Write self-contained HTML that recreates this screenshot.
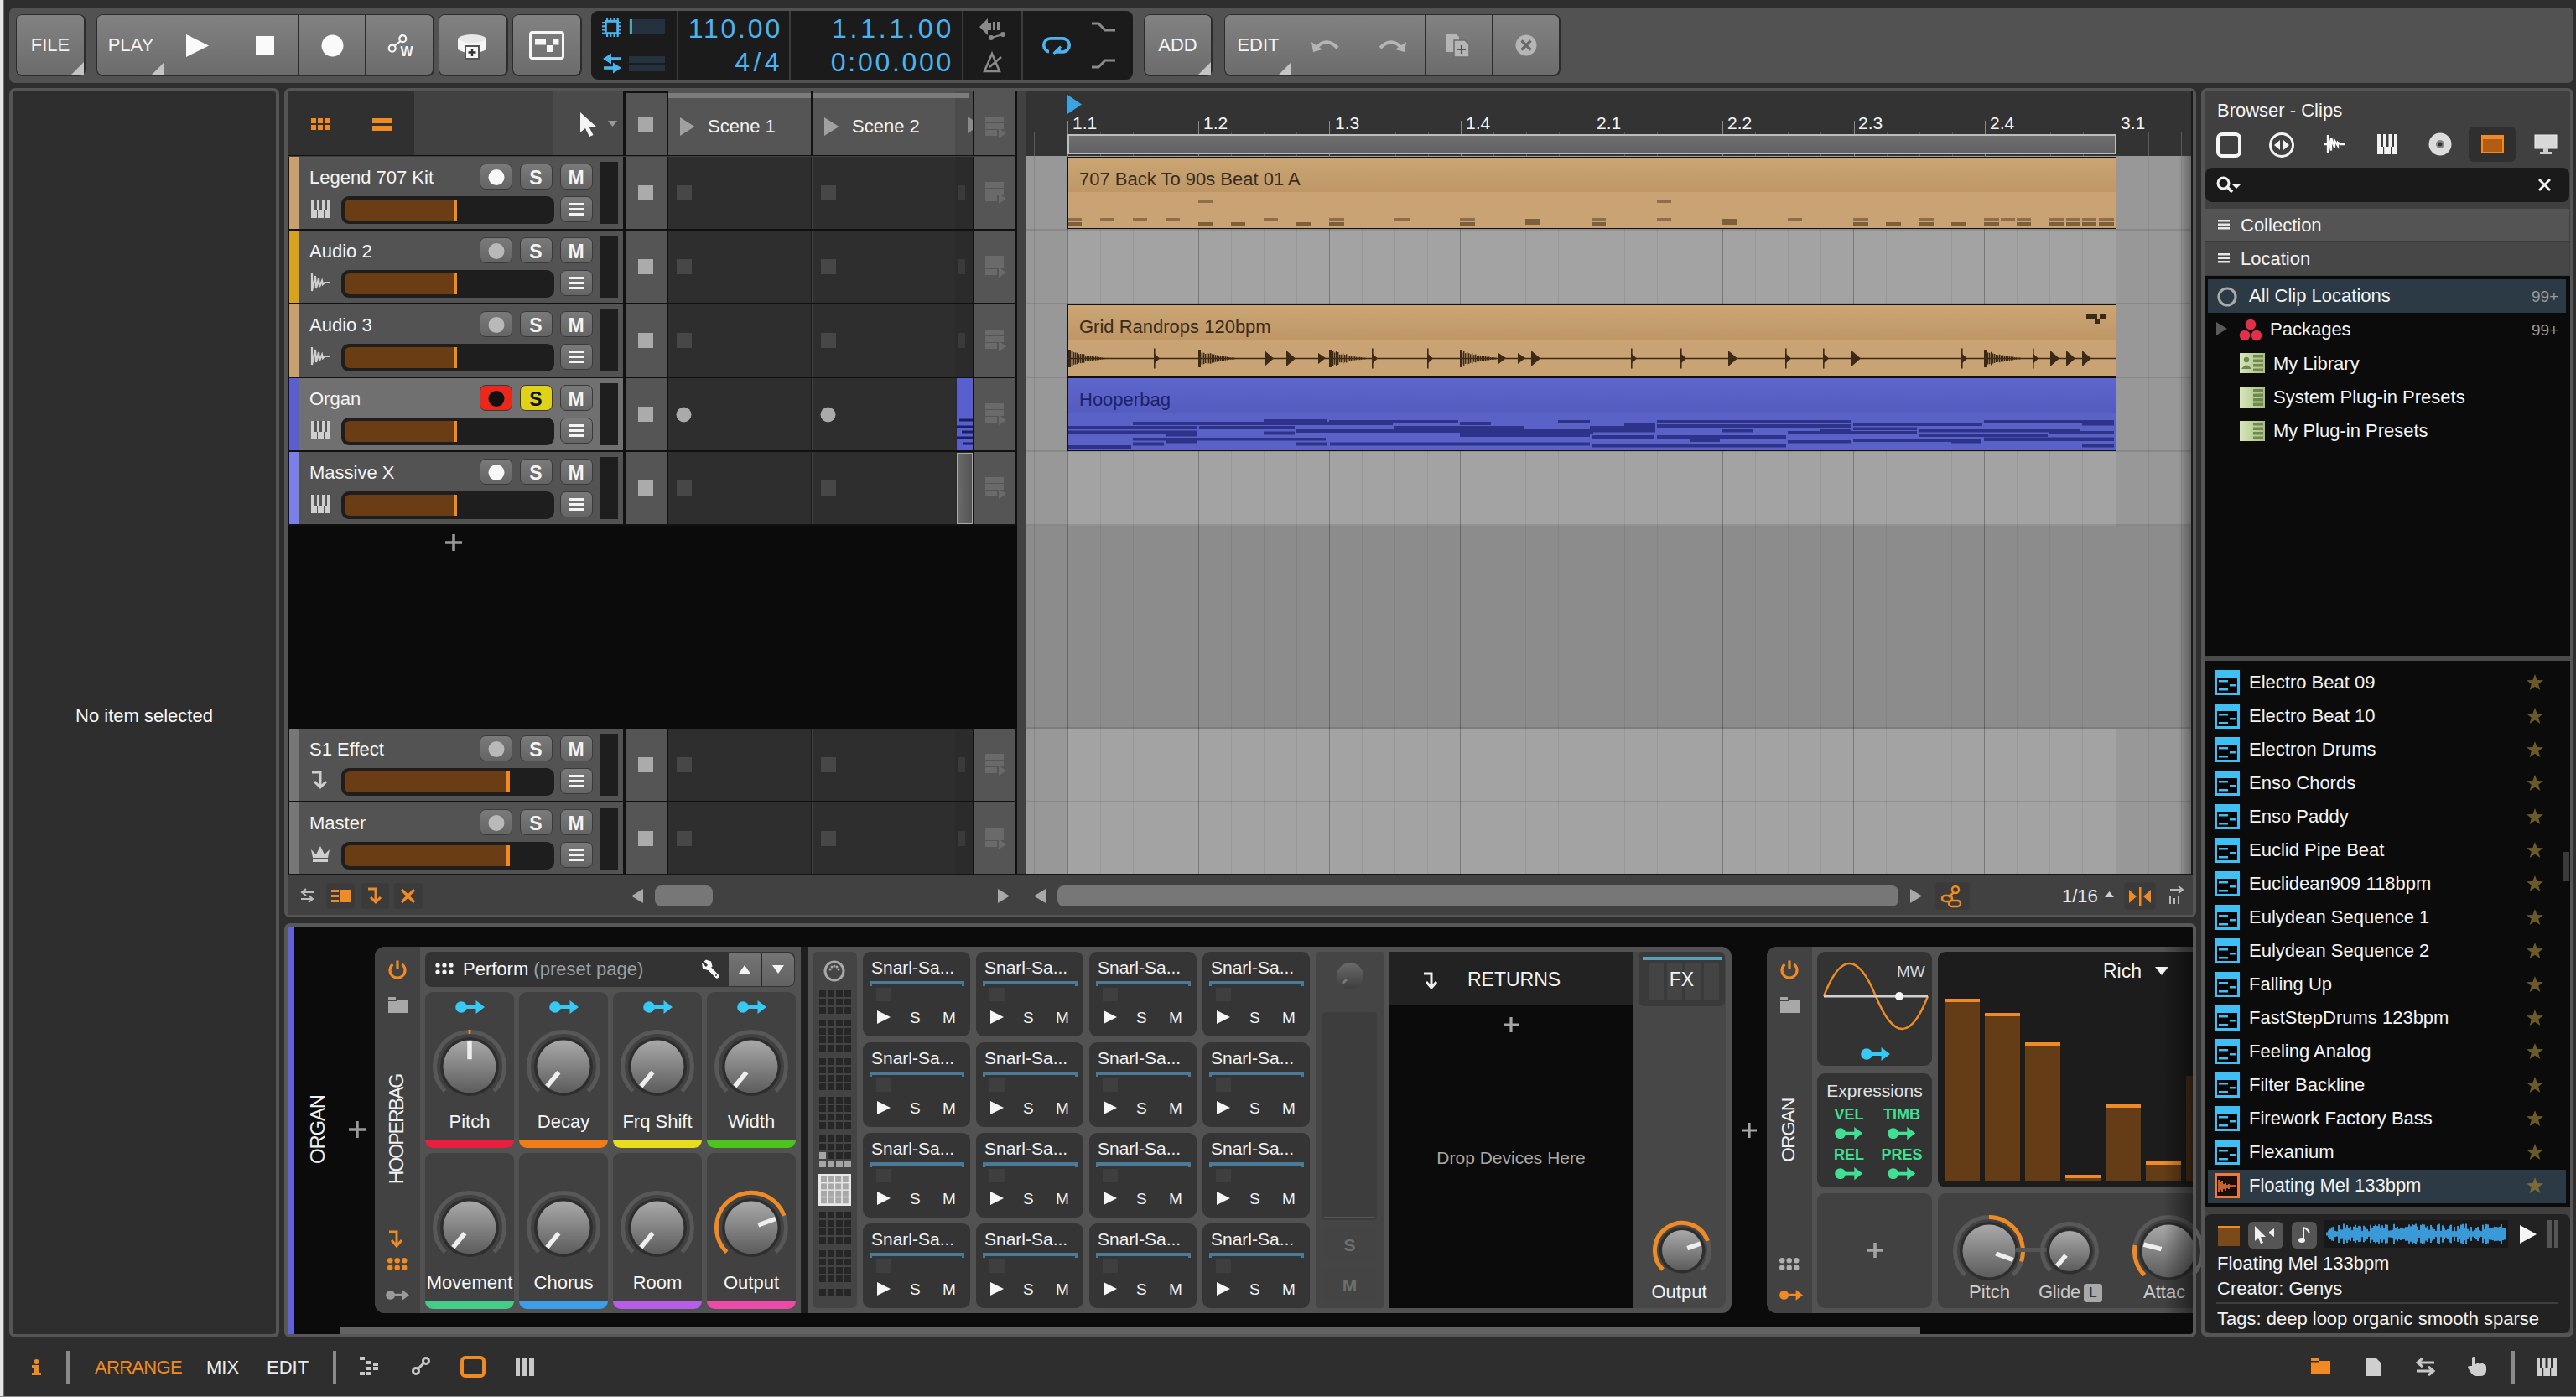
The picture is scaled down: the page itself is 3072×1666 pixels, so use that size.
<!DOCTYPE html><html><head><meta charset="utf-8"><title>Bitwig</title><style>
html,body{margin:0;padding:0;}
body{width:3072px;height:1666px;overflow:hidden;background:#2e2e2e;position:relative;font-family:"Liberation Sans",sans-serif;}
.a{position:absolute;box-sizing:border-box;}
.t{position:absolute;line-height:1;white-space:nowrap;}
svg.a{overflow:visible;}
</style></head><body>
<div class="a" style="left:0px;top:0px;width:3px;height:1666px;background:#e6e6e6;"></div>
<div class="a" style="left:3px;top:0px;width:1px;height:1666px;background:#1c1c1c;"></div>
<div class="a" style="left:4px;top:0px;width:1px;height:1666px;background:#6e6e6e;"></div>
<div class="a" style="left:11px;top:9px;width:3058px;height:90px;background:#525252;border-radius:7px;"></div>
<div class="a" style="left:18.5px;top:16.5px;width:83px;height:74px;background:#2c2c2c;border-radius:8px;"></div>
<div class="a" style="left:20px;top:18px;width:80px;height:71px;background:linear-gradient(#828282,#6c6c6c);border-top-left-radius:6px;border-bottom-left-radius:6px;border-top-right-radius:6px;border-bottom-right-radius:6px;"></div>
<div class="t" style="left:20px;top:43px;font-size:22px;color:#f4f4f4;text-align:center;width:80px;">FILE</div>
<svg class="a" style="left:85px;top:74px;" width="15" height="15" viewBox="0 0 15 15"><path d="M15 0 L15 15 L0 15 Z" fill="#c4c4c4"/></svg>
<div class="a" style="left:114.5px;top:16.5px;width:403px;height:74px;background:#2c2c2c;border-radius:8px;"></div>
<div class="a" style="left:116px;top:18px;width:79px;height:71px;background:linear-gradient(#828282,#6c6c6c);border-top-left-radius:6px;border-bottom-left-radius:6px;"></div>
<div class="a" style="left:196px;top:18px;width:79px;height:71px;background:linear-gradient(#828282,#6c6c6c);"></div>
<div class="a" style="left:276px;top:18px;width:79px;height:71px;background:linear-gradient(#828282,#6c6c6c);"></div>
<div class="a" style="left:356px;top:18px;width:79px;height:71px;background:linear-gradient(#828282,#6c6c6c);"></div>
<div class="a" style="left:436px;top:18px;width:80px;height:71px;background:linear-gradient(#828282,#6c6c6c);border-top-right-radius:6px;border-bottom-right-radius:6px;"></div>
<div class="t" style="left:116px;top:43px;font-size:22px;color:#f4f4f4;text-align:center;width:80px;">PLAY</div>
<svg class="a" style="left:181px;top:74px;" width="15" height="15" viewBox="0 0 15 15"><path d="M15 0 L15 15 L0 15 Z" fill="#c4c4c4"/></svg>
<svg class="a" style="left:222px;top:41px;" width="28" height="27" viewBox="0 0 28 27"><path d="M0 0 L27 13.5 L0 27 Z" fill="#fafafa"/></svg>
<div class="a" style="left:305px;top:43px;width:22px;height:22px;background:#fafafa;"></div>
<svg class="a" style="left:383px;top:41px;" width="27" height="27" viewBox="0 0 27 27"><circle cx="13.5" cy="13.5" r="13" fill="#fafafa"/></svg>
<svg class="a" style="left:460px;top:40px;" width="34" height="30" viewBox="0 0 34 30"><circle cx="7.7" cy="17.7" r="4" fill="none" stroke="#f6f6f6" stroke-width="2.2"/><circle cx="20.3" cy="6.2" r="4" fill="none" stroke="#f6f6f6" stroke-width="2.2"/><line x1="10.3" y1="14.8" x2="17.7" y2="9" stroke="#f6f6f6" stroke-width="2.2"/><text x="17.5" y="27" font-size="16" font-weight="bold" fill="#f6f6f6" font-family="Liberation Sans">W</text></svg>
<div class="a" style="left:522.5px;top:16.5px;width:83px;height:74px;background:#2c2c2c;border-radius:8px;"></div>
<div class="a" style="left:524px;top:18px;width:80px;height:71px;background:linear-gradient(#828282,#6c6c6c);border-top-left-radius:6px;border-bottom-left-radius:6px;border-top-right-radius:6px;border-bottom-right-radius:6px;"></div>
<svg class="a" style="left:546px;top:40px;" width="36" height="30" viewBox="0 0 36 30"><ellipse cx="17" cy="7" rx="17" ry="6" fill="#e8e8e8"/><path d="M0 7 L0 19 Q17 28 34 19 L34 7 Q17 16 0 7Z" fill="#f6f6f6"/><rect x="9" y="15" width="16" height="15" fill="#f6f6f6" stroke="#555" stroke-width="2"/><path d="M17 18 V27 M12.5 22.5 H21.5" stroke="#333" stroke-width="2.4"/></svg>
<div class="a" style="left:610.5px;top:16.5px;width:83px;height:74px;background:#2c2c2c;border-radius:8px;"></div>
<div class="a" style="left:612px;top:18px;width:80px;height:71px;background:linear-gradient(#828282,#6c6c6c);border-top-left-radius:6px;border-bottom-left-radius:6px;border-top-right-radius:6px;border-bottom-right-radius:6px;"></div>
<svg class="a" style="left:631px;top:37px;" width="42" height="34" viewBox="0 0 42 34"><rect x="1.5" y="1.5" width="39" height="31" rx="2.5" fill="none" stroke="#f6f6f6" stroke-width="3"/><rect x="7" y="9" width="13" height="7.5" fill="#f6f6f6"/><rect x="28" y="9" width="7.5" height="7.5" fill="#f6f6f6"/><rect x="21" y="17" width="7" height="8" fill="#f6f6f6"/></svg>
<div class="a" style="left:705px;top:13px;width:646px;height:82px;background:#1b1b1b;border-radius:8px;"></div>
<div class="a" style="left:807px;top:13px;width:2px;height:82px;background:#3c3c3c;"></div>
<div class="a" style="left:941px;top:13px;width:2px;height:82px;background:#3c3c3c;"></div>
<div class="a" style="left:1147px;top:13px;width:2px;height:82px;background:#3c3c3c;"></div>
<div class="a" style="left:1218px;top:13px;width:2px;height:82px;background:#3c3c3c;"></div>
<svg class="a" style="left:718px;top:21px;" width="24" height="24" viewBox="0 0 24 24"><rect x="4.4" y="4.4" width="14.2" height="14.2" fill="none" stroke="#4ab4ee" stroke-width="2.8"/><rect x="5.0" y="0" width="2.2" height="3" fill="#4ab4ee"/><rect x="5.0" y="20" width="2.2" height="3" fill="#4ab4ee"/><rect x="0" y="5.0" width="3" height="2.2" fill="#4ab4ee"/><rect x="20" y="5.0" width="3" height="2.2" fill="#4ab4ee"/><rect x="9.2" y="0" width="2.2" height="3" fill="#4ab4ee"/><rect x="9.2" y="20" width="2.2" height="3" fill="#4ab4ee"/><rect x="0" y="9.2" width="3" height="2.2" fill="#4ab4ee"/><rect x="20" y="9.2" width="3" height="2.2" fill="#4ab4ee"/><rect x="13.4" y="0" width="2.2" height="3" fill="#4ab4ee"/><rect x="13.4" y="20" width="2.2" height="3" fill="#4ab4ee"/><rect x="0" y="13.4" width="3" height="2.2" fill="#4ab4ee"/><rect x="20" y="13.4" width="3" height="2.2" fill="#4ab4ee"/><rect x="17.6" y="0" width="2.2" height="3" fill="#4ab4ee"/><rect x="17.6" y="20" width="2.2" height="3" fill="#4ab4ee"/><rect x="0" y="17.6" width="3" height="2.2" fill="#4ab4ee"/><rect x="20" y="17.6" width="3" height="2.2" fill="#4ab4ee"/></svg>
<div class="a" style="left:750px;top:23px;width:43px;height:18px;background:#23323e;"></div>
<div class="a" style="left:751px;top:23px;width:3px;height:18px;background:#4aa8a8;"></div>
<svg class="a" style="left:718px;top:63px;" width="26" height="26" viewBox="0 0 26 26"><path d="M1 7 L11 0.5 L11 13.5 Z" fill="#4ab4ee"/><rect x="10" y="5.2" width="12" height="3.6" fill="#4ab4ee"/><path d="M23 18 L13 11.5 L13 24.5 Z" fill="#4ab4ee"/><rect x="2" y="16.2" width="12" height="3.6" fill="#4ab4ee"/></svg>
<div class="a" style="left:750px;top:67px;width:43px;height:8px;background:#23323e;"></div>
<div class="a" style="left:750px;top:77px;width:43px;height:8px;background:#23323e;"></div>
<div class="t" style="left:700px;top:18px;font-size:32px;color:#4cb3ee;text-align:right;width:233px;letter-spacing:2.8px;">110.00</div>
<div class="t" style="left:700px;top:58px;font-size:32px;color:#4cb3ee;text-align:right;width:234px;letter-spacing:4.4px;">4/4</div>
<div class="t" style="left:900px;top:18px;font-size:32px;color:#4cb3ee;text-align:right;width:238px;letter-spacing:3.8px;">1.1.1.00</div>
<div class="t" style="left:900px;top:58px;font-size:32px;color:#4cb3ee;text-align:right;width:237px;letter-spacing:2.7px;">0:00.000</div>
<svg class="a" style="left:1168px;top:22px;" width="32" height="30" viewBox="0 0 32 30"><path d="M0 10 L10 0 V6 H14 V14 H10 V20 Z" fill="#8a8a8a"/><rect x="16" y="4" width="3" height="10" fill="#8a8a8a"/><rect x="21" y="4" width="3" height="10" fill="#8a8a8a"/><circle cx="14" cy="23" r="3" fill="#8a8a8a"/><circle cx="28" cy="19" r="3" fill="#8a8a8a"/><line x1="14" y1="23" x2="28" y2="19" stroke="#8a8a8a" stroke-width="2"/></svg>
<svg class="a" style="left:1172px;top:62px;" width="26" height="24" viewBox="0 0 26 24"><path d="M2 23 L11 2 L20 23 Z" fill="none" stroke="#8a8a8a" stroke-width="2.5"/><line x1="8" y1="18" x2="22" y2="6" stroke="#8a8a8a" stroke-width="2.5"/></svg>
<svg class="a" style="left:1241px;top:42px;" width="40" height="26" viewBox="0 0 40 26"><rect x="3.75" y="3.85" width="30.5" height="16.1" rx="8" fill="none" stroke="#4cb3ee" stroke-width="3.6"/><rect x="10" y="17" width="7" height="6" fill="#1b1b1b"/><path d="M15.5 22 L24 13.5 L24 20 Z" fill="#4cb3ee"/><line x1="15.5" y1="22" x2="24" y2="13.5" stroke="#4cb3ee" stroke-width="3"/></svg>
<svg class="a" style="left:1301px;top:26px;" width="30" height="12" viewBox="0 0 30 12"><path d="M1 2 H9 L17 10 H29" fill="none" stroke="#8a8a8a" stroke-width="3"/></svg>
<svg class="a" style="left:1301px;top:70px;" width="30" height="12" viewBox="0 0 30 12"><path d="M1 10 H9 L17 2 H29" fill="none" stroke="#8a8a8a" stroke-width="3"/></svg>
<div class="a" style="left:1363.5px;top:16.5px;width:82px;height:74px;background:#2c2c2c;border-radius:8px;"></div>
<div class="a" style="left:1365px;top:18px;width:79px;height:71px;background:linear-gradient(#828282,#6c6c6c);border-top-left-radius:6px;border-bottom-left-radius:6px;border-top-right-radius:6px;border-bottom-right-radius:6px;"></div>
<div class="t" style="left:1365px;top:43px;font-size:22px;color:#f4f4f4;text-align:center;width:79px;">ADD</div>
<svg class="a" style="left:1429px;top:74px;" width="15" height="15" viewBox="0 0 15 15"><path d="M15 0 L15 15 L0 15 Z" fill="#c4c4c4"/></svg>
<div class="a" style="left:1459.5px;top:16.5px;width:401px;height:74px;background:#2c2c2c;border-radius:8px;"></div>
<div class="a" style="left:1461px;top:18px;width:78px;height:71px;background:linear-gradient(#828282,#6c6c6c);border-top-left-radius:6px;border-bottom-left-radius:6px;"></div>
<div class="a" style="left:1540px;top:18px;width:79px;height:71px;background:linear-gradient(#828282,#6c6c6c);"></div>
<div class="a" style="left:1620px;top:18px;width:79px;height:71px;background:linear-gradient(#828282,#6c6c6c);"></div>
<div class="a" style="left:1700px;top:18px;width:79px;height:71px;background:linear-gradient(#828282,#6c6c6c);"></div>
<div class="a" style="left:1780px;top:18px;width:79px;height:71px;background:linear-gradient(#828282,#6c6c6c);border-top-right-radius:6px;border-bottom-right-radius:6px;"></div>
<div class="t" style="left:1461px;top:43px;font-size:22px;color:#f4f4f4;text-align:center;width:79px;">EDIT</div>
<svg class="a" style="left:1525px;top:74px;" width="15" height="15" viewBox="0 0 15 15"><path d="M15 0 L15 15 L0 15 Z" fill="#c4c4c4"/></svg>
<svg class="a" style="left:1563px;top:42px;" width="36" height="22" viewBox="0 0 36 22"><path d="M6 16 Q18 1 32 15" fill="none" stroke="#b5b5b5" stroke-width="4"/><path d="M1 8 L3 20 L14 17 Z" fill="#b5b5b5"/></svg>
<svg class="a" style="left:1642px;top:42px;" width="36" height="22" viewBox="0 0 36 22"><path d="M4 15 Q18 1 30 16" fill="none" stroke="#b5b5b5" stroke-width="4"/><path d="M35 8 L33 20 L22 17 Z" fill="#b5b5b5"/></svg>
<svg class="a" style="left:1724px;top:40px;" width="32" height="28" viewBox="0 0 32 28"><path d="M0 0 H12 L16 4 V22 H0 Z" fill="#b5b5b5"/><path d="M10 8 H23 L28 13 V28 H10 Z" fill="#b5b5b5" stroke="#6e6e6e" stroke-width="1.5"/><path d="M19 14 V24 M14 19 H24" stroke="#555" stroke-width="2.2"/></svg>
<svg class="a" style="left:1807px;top:41px;" width="26" height="26" viewBox="0 0 26 26"><circle cx="13" cy="13" r="12.5" fill="#b5b5b5"/><path d="M7.5 7.5 L18.5 18.5 M18.5 7.5 L7.5 18.5" stroke="#686868" stroke-width="3.2"/></svg>
<div class="a" style="left:11px;top:105px;width:322px;height:1490px;background:#2e2e2e;border:4px solid #555;border-radius:7px;"></div>
<div class="t" style="left:11px;top:843px;font-size:22px;color:#f6f6f6;text-align:center;width:322px;">No item selected</div>
<div class="a" style="left:339px;top:105px;width:2280px;height:989px;background:#414141;border:4px solid #555;border-radius:7px;"></div>
<div class="a" style="left:343px;top:109px;width:870px;height:77px;background:#111;"></div>
<div class="a" style="left:343px;top:109px;width:151px;height:76px;background:#303030;"></div>
<div class="a" style="left:494px;top:109px;width:166px;height:76px;background:#414141;"></div>
<div class="a" style="left:660px;top:109px;width:83px;height:76px;background:#4a4a4a;"></div>
<svg class="a" style="left:371px;top:141px;" width="24" height="16" viewBox="0 0 24 16"><rect x="0" y="0" width="6" height="6" fill="#f08a24"/><rect x="8" y="0" width="6" height="6" fill="#f08a24"/><rect x="16" y="0" width="6" height="6" fill="#f08a24"/><rect x="0" y="8" width="6" height="6" fill="#f08a24"/><rect x="8" y="8" width="6" height="6" fill="#f08a24"/><rect x="16" y="8" width="6" height="6" fill="#f08a24"/></svg>
<svg class="a" style="left:444px;top:140px;" width="24" height="18" viewBox="0 0 24 18"><rect x="0" y="1" width="23" height="6" fill="#f08a24"/><rect x="0" y="10" width="23" height="6" fill="#f08a24"/></svg>
<svg class="a" style="left:691px;top:133px;" width="46" height="32" viewBox="0 0 46 32"><path d="M1 1 L1 25 L7 20 L12 30 L16.5 28 L11.5 18.5 L20 18 Z" fill="#f4f4f4"/><path d="M34 11 L45 11 L39.5 18 Z" fill="#9a9a9a"/></svg>
<div class="a" style="left:746px;top:109px;width:50px;height:76px;background:#555;"></div>
<div class="a" style="left:761px;top:139px;width:18px;height:18px;background:#a8a8a8;"></div>
<div class="a" style="left:743px;top:109px;width:470px;height:2px;background:#111;"></div>
<div class="a" style="left:797px;top:109px;width:170px;height:76px;background:#555;"></div>
<div class="a" style="left:797px;top:111px;width:170px;height:6px;background:#7c7c7c;"></div>
<svg class="a" style="left:811px;top:140px;" width="18" height="22" viewBox="0 0 18 22"><path d="M0 0 L17.5 11 L0 22 Z" fill="#a0a0a0"/></svg>
<div class="t" style="left:844px;top:140px;font-size:22px;color:#f2f2f2;text-align:left;white-space:nowrap;">Scene 1</div>
<div class="a" style="left:969px;top:109px;width:170px;height:76px;background:#555;"></div>
<div class="a" style="left:969px;top:111px;width:170px;height:6px;background:#7c7c7c;"></div>
<svg class="a" style="left:983px;top:140px;" width="18" height="22" viewBox="0 0 18 22"><path d="M0 0 L17.5 11 L0 22 Z" fill="#a0a0a0"/></svg>
<div class="t" style="left:1016px;top:140px;font-size:22px;color:#f2f2f2;text-align:left;white-space:nowrap;">Scene 2</div>
<div class="a" style="left:1139px;top:109px;width:21px;height:76px;background:#4c4c4c;"></div>
<div class="a" style="left:1139px;top:111px;width:16px;height:6px;background:#7c7c7c;"></div>
<svg class="a" style="left:1154px;top:139px;" width="6" height="20" viewBox="0 0 6 20"><path d="M0 0 L6 4 L6 16 L0 20 Z" fill="#8a8a8a"/></svg>
<div class="a" style="left:1162px;top:109px;width:49px;height:76px;background:#555;"></div>
<div class="a" style="left:1211px;top:109px;width:2px;height:934px;background:#111;"></div>
<svg class="a" style="left:1175px;top:139px;" width="26" height="26" viewBox="0 0 26 26"><rect x="0" y="0" width="22" height="7" fill="#6a6a6a"/><rect x="0" y="8" width="22" height="7" fill="#6a6a6a"/><rect x="0" y="16" width="14" height="7" fill="#6a6a6a"/><path d="M16 14 L25 20 L16 26 Z" fill="#6a6a6a"/></svg>
<div class="a" style="left:343px;top:187px;width:400px;height:86px;background:#535353;"></div>
<div class="a" style="left:343px;top:187px;width:2px;height:86px;background:#111;"></div>
<div class="a" style="left:345px;top:187px;width:12px;height:86px;background:#c9a070;"></div>
<div class="t" style="left:369px;top:201px;font-size:22px;color:#f4f4f4;text-align:left;white-space:nowrap;">Legend 707 Kit</div>
<div class="a" style="left:572px;top:195px;width:39px;height:31px;background:linear-gradient(#7a7a7a,#656565);border:1.5px solid #3a3a3a;border-radius:7px;"><svg class="a" style="left:8px;top:5px;" width="22" height="22" viewBox="0 0 22 22"><circle cx="11" cy="10.5" r="9.5" fill="#f8f8f8"/></svg></div>
<div class="a" style="left:620px;top:195px;width:39px;height:31px;background:linear-gradient(#7a7a7a,#656565);border:1.5px solid #3a3a3a;border-radius:7px;"><div class="t" style="left:0px;top:5px;font-size:23px;color:#f4f4f4;text-align:center;width:36px;font-weight:bold;">S</div></div>
<div class="a" style="left:668px;top:195px;width:39px;height:31px;background:linear-gradient(#7a7a7a,#656565);border:1.5px solid #3a3a3a;border-radius:7px;"><div class="t" style="left:0px;top:5px;font-size:23px;color:#f4f4f4;text-align:center;width:36px;font-weight:bold;">M</div></div>
<div class="a" style="left:668px;top:234px;width:39px;height:31px;background:linear-gradient(#7a7a7a,#656565);border:1.5px solid #3a3a3a;border-radius:7px;"><svg class="a" style="left:9px;top:7px;" width="20" height="16" viewBox="0 0 20 16"><rect x="0" y="0" width="19" height="3" fill="#f4f4f4"/><rect x="0" y="6" width="19" height="3" fill="#f4f4f4"/><rect x="0" y="12" width="19" height="3" fill="#f4f4f4"/></svg></div>
<svg class="a" style="left:371px;top:238px;" width="23" height="22" viewBox="0 0 23 22"><rect x="0" y="0" width="23" height="22" fill="#cfcfcf"/><rect x="4" y="0" width="3" height="13" fill="#555"/><rect x="10" y="0" width="3" height="13" fill="#555"/><rect x="16" y="0" width="3" height="13" fill="#555"/><rect x="7" y="13" width="1" height="9" fill="#555"/><rect x="15" y="13" width="1" height="9" fill="#555"/></svg>
<div class="a" style="left:407px;top:234px;width:254px;height:33px;background:#1e1e1e;border-radius:9px;"></div>
<div class="a" style="left:411px;top:238px;width:134px;height:25px;background:#6b3d14;border-radius:6px 0 0 6px;"></div>
<div class="a" style="left:541px;top:238px;width:4px;height:25px;background:#f18a1f;"></div>
<div class="a" style="left:715px;top:193px;width:22px;height:74px;background:#1e1e1e;"></div>
<div class="a" style="left:743px;top:187px;width:3px;height:86px;background:#111;"></div>
<div class="a" style="left:746px;top:187px;width:50px;height:86px;background:#555;"></div>
<div class="a" style="left:761px;top:221px;width:18px;height:18px;background:#ababab;"></div>
<div class="a" style="left:796px;top:187px;width:1px;height:86px;background:#111;"></div>
<div class="a" style="left:797px;top:187px;width:171px;height:86px;background:#2e2e2e;"></div>
<div class="a" style="left:967px;top:187px;width:1px;height:86px;background:#1c1c1c;"></div>
<div class="a" style="left:807px;top:221px;width:18px;height:18px;background:#474747;"></div>
<div class="a" style="left:969px;top:187px;width:171px;height:86px;background:#2e2e2e;"></div>
<div class="a" style="left:1139px;top:187px;width:1px;height:86px;background:#1c1c1c;"></div>
<div class="a" style="left:979px;top:221px;width:18px;height:18px;background:#474747;"></div>
<div class="a" style="left:1139px;top:187px;width:21px;height:86px;background:#2b2b2b;"></div>
<div class="a" style="left:1143px;top:221px;width:8px;height:18px;background:#3a3a3a;"></div>
<div class="a" style="left:1160px;top:187px;width:2px;height:86px;background:#111;"></div>
<div class="a" style="left:1162px;top:187px;width:49px;height:86px;background:#555;"></div>
<svg class="a" style="left:1175px;top:217px;" width="26" height="26" viewBox="0 0 26 26"><rect x="0" y="0" width="22" height="7" fill="#6a6a6a"/><rect x="0" y="8" width="22" height="7" fill="#6a6a6a"/><rect x="0" y="16" width="14" height="7" fill="#6a6a6a"/><path d="M16 14 L25 20 L16 26 Z" fill="#6a6a6a"/></svg>
<div class="a" style="left:343px;top:273px;width:870px;height:2px;background:#111;"></div>
<div class="a" style="left:343px;top:275px;width:400px;height:86px;background:#535353;"></div>
<div class="a" style="left:343px;top:275px;width:2px;height:86px;background:#111;"></div>
<div class="a" style="left:345px;top:275px;width:12px;height:86px;background:#d9a21b;"></div>
<div class="t" style="left:369px;top:289px;font-size:22px;color:#f4f4f4;text-align:left;white-space:nowrap;">Audio 2</div>
<div class="a" style="left:572px;top:283px;width:39px;height:31px;background:linear-gradient(#7a7a7a,#656565);border:1.5px solid #3a3a3a;border-radius:7px;"><svg class="a" style="left:8px;top:5px;" width="22" height="22" viewBox="0 0 22 22"><circle cx="11" cy="10.5" r="9.5" fill="#b9b9b9"/></svg></div>
<div class="a" style="left:620px;top:283px;width:39px;height:31px;background:linear-gradient(#7a7a7a,#656565);border:1.5px solid #3a3a3a;border-radius:7px;"><div class="t" style="left:0px;top:5px;font-size:23px;color:#f4f4f4;text-align:center;width:36px;font-weight:bold;">S</div></div>
<div class="a" style="left:668px;top:283px;width:39px;height:31px;background:linear-gradient(#7a7a7a,#656565);border:1.5px solid #3a3a3a;border-radius:7px;"><div class="t" style="left:0px;top:5px;font-size:23px;color:#f4f4f4;text-align:center;width:36px;font-weight:bold;">M</div></div>
<div class="a" style="left:668px;top:322px;width:39px;height:31px;background:linear-gradient(#7a7a7a,#656565);border:1.5px solid #3a3a3a;border-radius:7px;"><svg class="a" style="left:9px;top:7px;" width="20" height="16" viewBox="0 0 20 16"><rect x="0" y="0" width="19" height="3" fill="#f4f4f4"/><rect x="0" y="6" width="19" height="3" fill="#f4f4f4"/><rect x="0" y="12" width="19" height="3" fill="#f4f4f4"/></svg></div>
<svg class="a" style="left:370px;top:325px;" width="26" height="26" viewBox="0 0 26 26"><polyline points="2,1 2,22 6,4 7,19 10,7 11,17 14,10 15,14 17,12 23,12" stroke="#cfcfcf" stroke-width="2.2" fill="none" stroke-linejoin="miter"/></svg>
<div class="a" style="left:407px;top:322px;width:254px;height:33px;background:#1e1e1e;border-radius:9px;"></div>
<div class="a" style="left:411px;top:326px;width:134px;height:25px;background:#6b3d14;border-radius:6px 0 0 6px;"></div>
<div class="a" style="left:541px;top:326px;width:4px;height:25px;background:#f18a1f;"></div>
<div class="a" style="left:715px;top:281px;width:22px;height:74px;background:#1e1e1e;"></div>
<div class="a" style="left:743px;top:275px;width:3px;height:86px;background:#111;"></div>
<div class="a" style="left:746px;top:275px;width:50px;height:86px;background:#555;"></div>
<div class="a" style="left:761px;top:309px;width:18px;height:18px;background:#ababab;"></div>
<div class="a" style="left:796px;top:275px;width:1px;height:86px;background:#111;"></div>
<div class="a" style="left:797px;top:275px;width:171px;height:86px;background:#2e2e2e;"></div>
<div class="a" style="left:967px;top:275px;width:1px;height:86px;background:#1c1c1c;"></div>
<div class="a" style="left:807px;top:309px;width:18px;height:18px;background:#474747;"></div>
<div class="a" style="left:969px;top:275px;width:171px;height:86px;background:#2e2e2e;"></div>
<div class="a" style="left:1139px;top:275px;width:1px;height:86px;background:#1c1c1c;"></div>
<div class="a" style="left:979px;top:309px;width:18px;height:18px;background:#474747;"></div>
<div class="a" style="left:1139px;top:275px;width:21px;height:86px;background:#2b2b2b;"></div>
<div class="a" style="left:1143px;top:309px;width:8px;height:18px;background:#3a3a3a;"></div>
<div class="a" style="left:1160px;top:275px;width:2px;height:86px;background:#111;"></div>
<div class="a" style="left:1162px;top:275px;width:49px;height:86px;background:#555;"></div>
<svg class="a" style="left:1175px;top:305px;" width="26" height="26" viewBox="0 0 26 26"><rect x="0" y="0" width="22" height="7" fill="#6a6a6a"/><rect x="0" y="8" width="22" height="7" fill="#6a6a6a"/><rect x="0" y="16" width="14" height="7" fill="#6a6a6a"/><path d="M16 14 L25 20 L16 26 Z" fill="#6a6a6a"/></svg>
<div class="a" style="left:343px;top:361px;width:870px;height:2px;background:#111;"></div>
<div class="a" style="left:343px;top:363px;width:400px;height:86px;background:#535353;"></div>
<div class="a" style="left:343px;top:363px;width:2px;height:86px;background:#111;"></div>
<div class="a" style="left:345px;top:363px;width:12px;height:86px;background:#c9a070;"></div>
<div class="t" style="left:369px;top:377px;font-size:22px;color:#f4f4f4;text-align:left;white-space:nowrap;">Audio 3</div>
<div class="a" style="left:572px;top:371px;width:39px;height:31px;background:linear-gradient(#7a7a7a,#656565);border:1.5px solid #3a3a3a;border-radius:7px;"><svg class="a" style="left:8px;top:5px;" width="22" height="22" viewBox="0 0 22 22"><circle cx="11" cy="10.5" r="9.5" fill="#b9b9b9"/></svg></div>
<div class="a" style="left:620px;top:371px;width:39px;height:31px;background:linear-gradient(#7a7a7a,#656565);border:1.5px solid #3a3a3a;border-radius:7px;"><div class="t" style="left:0px;top:5px;font-size:23px;color:#f4f4f4;text-align:center;width:36px;font-weight:bold;">S</div></div>
<div class="a" style="left:668px;top:371px;width:39px;height:31px;background:linear-gradient(#7a7a7a,#656565);border:1.5px solid #3a3a3a;border-radius:7px;"><div class="t" style="left:0px;top:5px;font-size:23px;color:#f4f4f4;text-align:center;width:36px;font-weight:bold;">M</div></div>
<div class="a" style="left:668px;top:410px;width:39px;height:31px;background:linear-gradient(#7a7a7a,#656565);border:1.5px solid #3a3a3a;border-radius:7px;"><svg class="a" style="left:9px;top:7px;" width="20" height="16" viewBox="0 0 20 16"><rect x="0" y="0" width="19" height="3" fill="#f4f4f4"/><rect x="0" y="6" width="19" height="3" fill="#f4f4f4"/><rect x="0" y="12" width="19" height="3" fill="#f4f4f4"/></svg></div>
<svg class="a" style="left:370px;top:413px;" width="26" height="26" viewBox="0 0 26 26"><polyline points="2,1 2,22 6,4 7,19 10,7 11,17 14,10 15,14 17,12 23,12" stroke="#cfcfcf" stroke-width="2.2" fill="none" stroke-linejoin="miter"/></svg>
<div class="a" style="left:407px;top:410px;width:254px;height:33px;background:#1e1e1e;border-radius:9px;"></div>
<div class="a" style="left:411px;top:414px;width:134px;height:25px;background:#6b3d14;border-radius:6px 0 0 6px;"></div>
<div class="a" style="left:541px;top:414px;width:4px;height:25px;background:#f18a1f;"></div>
<div class="a" style="left:715px;top:369px;width:22px;height:74px;background:#1e1e1e;"></div>
<div class="a" style="left:743px;top:363px;width:3px;height:86px;background:#111;"></div>
<div class="a" style="left:746px;top:363px;width:50px;height:86px;background:#555;"></div>
<div class="a" style="left:761px;top:397px;width:18px;height:18px;background:#ababab;"></div>
<div class="a" style="left:796px;top:363px;width:1px;height:86px;background:#111;"></div>
<div class="a" style="left:797px;top:363px;width:171px;height:86px;background:#2e2e2e;"></div>
<div class="a" style="left:967px;top:363px;width:1px;height:86px;background:#1c1c1c;"></div>
<div class="a" style="left:807px;top:397px;width:18px;height:18px;background:#474747;"></div>
<div class="a" style="left:969px;top:363px;width:171px;height:86px;background:#2e2e2e;"></div>
<div class="a" style="left:1139px;top:363px;width:1px;height:86px;background:#1c1c1c;"></div>
<div class="a" style="left:979px;top:397px;width:18px;height:18px;background:#474747;"></div>
<div class="a" style="left:1139px;top:363px;width:21px;height:86px;background:#2b2b2b;"></div>
<div class="a" style="left:1143px;top:397px;width:8px;height:18px;background:#3a3a3a;"></div>
<div class="a" style="left:1160px;top:363px;width:2px;height:86px;background:#111;"></div>
<div class="a" style="left:1162px;top:363px;width:49px;height:86px;background:#555;"></div>
<svg class="a" style="left:1175px;top:393px;" width="26" height="26" viewBox="0 0 26 26"><rect x="0" y="0" width="22" height="7" fill="#6a6a6a"/><rect x="0" y="8" width="22" height="7" fill="#6a6a6a"/><rect x="0" y="16" width="14" height="7" fill="#6a6a6a"/><path d="M16 14 L25 20 L16 26 Z" fill="#6a6a6a"/></svg>
<div class="a" style="left:343px;top:449px;width:870px;height:2px;background:#111;"></div>
<div class="a" style="left:343px;top:451px;width:400px;height:86px;background:#707070;"></div>
<div class="a" style="left:343px;top:451px;width:2px;height:86px;background:#111;"></div>
<div class="a" style="left:345px;top:451px;width:12px;height:86px;background:#5a5fd0;"></div>
<div class="t" style="left:369px;top:465px;font-size:22px;color:#f4f4f4;text-align:left;white-space:nowrap;">Organ</div>
<div class="a" style="left:572px;top:459px;width:39px;height:31px;background:#e8291c;border:1.5px solid #3a3a3a;border-radius:7px;"><svg class="a" style="left:8px;top:5px;" width="22" height="22" viewBox="0 0 22 22"><circle cx="11" cy="10.5" r="9.5" fill="#111"/></svg></div>
<div class="a" style="left:620px;top:459px;width:39px;height:31px;background:#dfd21a;border:1.5px solid #3a3a3a;border-radius:7px;"><div class="t" style="left:0px;top:5px;font-size:23px;color:#111;text-align:center;width:36px;font-weight:bold;">S</div></div>
<div class="a" style="left:668px;top:459px;width:39px;height:31px;background:linear-gradient(#7a7a7a,#656565);border:1.5px solid #3a3a3a;border-radius:7px;"><div class="t" style="left:0px;top:5px;font-size:23px;color:#f4f4f4;text-align:center;width:36px;font-weight:bold;">M</div></div>
<div class="a" style="left:668px;top:498px;width:39px;height:31px;background:linear-gradient(#7a7a7a,#656565);border:1.5px solid #3a3a3a;border-radius:7px;"><svg class="a" style="left:9px;top:7px;" width="20" height="16" viewBox="0 0 20 16"><rect x="0" y="0" width="19" height="3" fill="#f4f4f4"/><rect x="0" y="6" width="19" height="3" fill="#f4f4f4"/><rect x="0" y="12" width="19" height="3" fill="#f4f4f4"/></svg></div>
<svg class="a" style="left:371px;top:502px;" width="23" height="22" viewBox="0 0 23 22"><rect x="0" y="0" width="23" height="22" fill="#cfcfcf"/><rect x="4" y="0" width="3" height="13" fill="#555"/><rect x="10" y="0" width="3" height="13" fill="#555"/><rect x="16" y="0" width="3" height="13" fill="#555"/><rect x="7" y="13" width="1" height="9" fill="#555"/><rect x="15" y="13" width="1" height="9" fill="#555"/></svg>
<div class="a" style="left:407px;top:498px;width:254px;height:33px;background:#1e1e1e;border-radius:9px;"></div>
<div class="a" style="left:411px;top:502px;width:134px;height:25px;background:#6b3d14;border-radius:6px 0 0 6px;"></div>
<div class="a" style="left:541px;top:502px;width:4px;height:25px;background:#f18a1f;"></div>
<div class="a" style="left:715px;top:457px;width:22px;height:74px;background:#1e1e1e;"></div>
<div class="a" style="left:743px;top:451px;width:3px;height:86px;background:#111;"></div>
<div class="a" style="left:746px;top:451px;width:50px;height:86px;background:#555;"></div>
<div class="a" style="left:761px;top:485px;width:18px;height:18px;background:#ababab;"></div>
<div class="a" style="left:796px;top:451px;width:1px;height:86px;background:#111;"></div>
<div class="a" style="left:797px;top:451px;width:171px;height:86px;background:#2e2e2e;"></div>
<div class="a" style="left:967px;top:451px;width:1px;height:86px;background:#1c1c1c;"></div>
<svg class="a" style="left:806px;top:485px;" width="19" height="19" viewBox="0 0 19 19"><circle cx="9.5" cy="9.5" r="9" fill="#aaa"/></svg>
<div class="a" style="left:969px;top:451px;width:171px;height:86px;background:#2e2e2e;"></div>
<div class="a" style="left:1139px;top:451px;width:1px;height:86px;background:#1c1c1c;"></div>
<svg class="a" style="left:978px;top:485px;" width="19" height="19" viewBox="0 0 19 19"><circle cx="9.5" cy="9.5" r="9" fill="#aaa"/></svg>
<div class="a" style="left:1139px;top:451px;width:21px;height:86px;background:#2b2b2b;"></div>
<div class="a" style="left:1141px;top:451px;width:19px;height:86px;background:#5a5fd0;"></div>
<svg class="a" style="left:1141px;top:495px;" width="19" height="40" viewBox="0 0 19 40"><path d="M3 6 H19 M0 14 H19 M6 20 H19 M0 27 H19 M8 34 H19" stroke="#1a1f60" stroke-width="3"/></svg>
<div class="a" style="left:1160px;top:451px;width:2px;height:86px;background:#111;"></div>
<div class="a" style="left:1162px;top:451px;width:49px;height:86px;background:#555;"></div>
<svg class="a" style="left:1175px;top:481px;" width="26" height="26" viewBox="0 0 26 26"><rect x="0" y="0" width="22" height="7" fill="#6a6a6a"/><rect x="0" y="8" width="22" height="7" fill="#6a6a6a"/><rect x="0" y="16" width="14" height="7" fill="#6a6a6a"/><path d="M16 14 L25 20 L16 26 Z" fill="#6a6a6a"/></svg>
<div class="a" style="left:343px;top:537px;width:870px;height:2px;background:#111;"></div>
<div class="a" style="left:343px;top:539px;width:400px;height:86px;background:#535353;"></div>
<div class="a" style="left:343px;top:539px;width:2px;height:86px;background:#111;"></div>
<div class="a" style="left:345px;top:539px;width:12px;height:86px;background:#7b80e8;"></div>
<div class="t" style="left:369px;top:553px;font-size:22px;color:#f4f4f4;text-align:left;white-space:nowrap;">Massive X</div>
<div class="a" style="left:572px;top:547px;width:39px;height:31px;background:linear-gradient(#7a7a7a,#656565);border:1.5px solid #3a3a3a;border-radius:7px;"><svg class="a" style="left:8px;top:5px;" width="22" height="22" viewBox="0 0 22 22"><circle cx="11" cy="10.5" r="9.5" fill="#f8f8f8"/></svg></div>
<div class="a" style="left:620px;top:547px;width:39px;height:31px;background:linear-gradient(#7a7a7a,#656565);border:1.5px solid #3a3a3a;border-radius:7px;"><div class="t" style="left:0px;top:5px;font-size:23px;color:#f4f4f4;text-align:center;width:36px;font-weight:bold;">S</div></div>
<div class="a" style="left:668px;top:547px;width:39px;height:31px;background:linear-gradient(#7a7a7a,#656565);border:1.5px solid #3a3a3a;border-radius:7px;"><div class="t" style="left:0px;top:5px;font-size:23px;color:#f4f4f4;text-align:center;width:36px;font-weight:bold;">M</div></div>
<div class="a" style="left:668px;top:586px;width:39px;height:31px;background:linear-gradient(#7a7a7a,#656565);border:1.5px solid #3a3a3a;border-radius:7px;"><svg class="a" style="left:9px;top:7px;" width="20" height="16" viewBox="0 0 20 16"><rect x="0" y="0" width="19" height="3" fill="#f4f4f4"/><rect x="0" y="6" width="19" height="3" fill="#f4f4f4"/><rect x="0" y="12" width="19" height="3" fill="#f4f4f4"/></svg></div>
<svg class="a" style="left:371px;top:590px;" width="23" height="22" viewBox="0 0 23 22"><rect x="0" y="0" width="23" height="22" fill="#cfcfcf"/><rect x="4" y="0" width="3" height="13" fill="#555"/><rect x="10" y="0" width="3" height="13" fill="#555"/><rect x="16" y="0" width="3" height="13" fill="#555"/><rect x="7" y="13" width="1" height="9" fill="#555"/><rect x="15" y="13" width="1" height="9" fill="#555"/></svg>
<div class="a" style="left:407px;top:586px;width:254px;height:33px;background:#1e1e1e;border-radius:9px;"></div>
<div class="a" style="left:411px;top:590px;width:134px;height:25px;background:#6b3d14;border-radius:6px 0 0 6px;"></div>
<div class="a" style="left:541px;top:590px;width:4px;height:25px;background:#f18a1f;"></div>
<div class="a" style="left:715px;top:545px;width:22px;height:74px;background:#1e1e1e;"></div>
<div class="a" style="left:743px;top:539px;width:3px;height:86px;background:#111;"></div>
<div class="a" style="left:746px;top:539px;width:50px;height:86px;background:#555;"></div>
<div class="a" style="left:761px;top:573px;width:18px;height:18px;background:#ababab;"></div>
<div class="a" style="left:796px;top:539px;width:1px;height:86px;background:#111;"></div>
<div class="a" style="left:797px;top:539px;width:171px;height:86px;background:#2e2e2e;"></div>
<div class="a" style="left:967px;top:539px;width:1px;height:86px;background:#1c1c1c;"></div>
<div class="a" style="left:807px;top:573px;width:18px;height:18px;background:#474747;"></div>
<div class="a" style="left:969px;top:539px;width:171px;height:86px;background:#2e2e2e;"></div>
<div class="a" style="left:1139px;top:539px;width:1px;height:86px;background:#1c1c1c;"></div>
<div class="a" style="left:979px;top:573px;width:18px;height:18px;background:#474747;"></div>
<div class="a" style="left:1139px;top:539px;width:21px;height:86px;background:#2b2b2b;"></div>
<div class="a" style="left:1141px;top:540px;width:19px;height:85px;background:linear-gradient(90deg,#6a6a6a,#555);border:1.5px solid #aaa;"></div>
<div class="a" style="left:1160px;top:539px;width:2px;height:86px;background:#111;"></div>
<div class="a" style="left:1162px;top:539px;width:49px;height:86px;background:#555;"></div>
<svg class="a" style="left:1175px;top:569px;" width="26" height="26" viewBox="0 0 26 26"><rect x="0" y="0" width="22" height="7" fill="#6a6a6a"/><rect x="0" y="8" width="22" height="7" fill="#6a6a6a"/><rect x="0" y="16" width="14" height="7" fill="#6a6a6a"/><path d="M16 14 L25 20 L16 26 Z" fill="#6a6a6a"/></svg>
<div class="a" style="left:343px;top:625px;width:870px;height:2px;background:#111;"></div>
<div class="a" style="left:343px;top:869px;width:400px;height:86px;background:#535353;"></div>
<div class="a" style="left:343px;top:869px;width:2px;height:86px;background:#111;"></div>
<div class="a" style="left:345px;top:869px;width:12px;height:86px;background:#777;"></div>
<div class="t" style="left:369px;top:883px;font-size:22px;color:#f4f4f4;text-align:left;white-space:nowrap;">S1 Effect</div>
<div class="a" style="left:572px;top:877px;width:39px;height:31px;background:linear-gradient(#7a7a7a,#656565);border:1.5px solid #3a3a3a;border-radius:7px;"><svg class="a" style="left:8px;top:5px;" width="22" height="22" viewBox="0 0 22 22"><circle cx="11" cy="10.5" r="9.5" fill="#b9b9b9"/></svg></div>
<div class="a" style="left:620px;top:877px;width:39px;height:31px;background:linear-gradient(#7a7a7a,#656565);border:1.5px solid #3a3a3a;border-radius:7px;"><div class="t" style="left:0px;top:5px;font-size:23px;color:#f4f4f4;text-align:center;width:36px;font-weight:bold;">S</div></div>
<div class="a" style="left:668px;top:877px;width:39px;height:31px;background:linear-gradient(#7a7a7a,#656565);border:1.5px solid #3a3a3a;border-radius:7px;"><div class="t" style="left:0px;top:5px;font-size:23px;color:#f4f4f4;text-align:center;width:36px;font-weight:bold;">M</div></div>
<div class="a" style="left:668px;top:916px;width:39px;height:31px;background:linear-gradient(#7a7a7a,#656565);border:1.5px solid #3a3a3a;border-radius:7px;"><svg class="a" style="left:9px;top:7px;" width="20" height="16" viewBox="0 0 20 16"><rect x="0" y="0" width="19" height="3" fill="#f4f4f4"/><rect x="0" y="6" width="19" height="3" fill="#f4f4f4"/><rect x="0" y="12" width="19" height="3" fill="#f4f4f4"/></svg></div>
<svg class="a" style="left:370px;top:918px;" width="22" height="24" viewBox="0 0 22 24"><path d="M2 3 H12 V20 M5 14 L12 21 L19 14" stroke="#cfcfcf" stroke-width="3" fill="none"/></svg>
<div class="a" style="left:407px;top:916px;width:254px;height:33px;background:#1e1e1e;border-radius:9px;"></div>
<div class="a" style="left:411px;top:920px;width:197px;height:25px;background:#6b3d14;border-radius:6px 0 0 6px;"></div>
<div class="a" style="left:604px;top:920px;width:4px;height:25px;background:#f18a1f;"></div>
<div class="a" style="left:715px;top:875px;width:22px;height:74px;background:#1e1e1e;"></div>
<div class="a" style="left:743px;top:869px;width:3px;height:86px;background:#111;"></div>
<div class="a" style="left:746px;top:869px;width:50px;height:86px;background:#555;"></div>
<div class="a" style="left:761px;top:903px;width:18px;height:18px;background:#ababab;"></div>
<div class="a" style="left:796px;top:869px;width:1px;height:86px;background:#111;"></div>
<div class="a" style="left:797px;top:869px;width:171px;height:86px;background:#2e2e2e;"></div>
<div class="a" style="left:967px;top:869px;width:1px;height:86px;background:#1c1c1c;"></div>
<div class="a" style="left:807px;top:903px;width:18px;height:18px;background:#474747;"></div>
<div class="a" style="left:969px;top:869px;width:171px;height:86px;background:#2e2e2e;"></div>
<div class="a" style="left:1139px;top:869px;width:1px;height:86px;background:#1c1c1c;"></div>
<div class="a" style="left:979px;top:903px;width:18px;height:18px;background:#474747;"></div>
<div class="a" style="left:1139px;top:869px;width:21px;height:86px;background:#2b2b2b;"></div>
<div class="a" style="left:1143px;top:903px;width:8px;height:18px;background:#3a3a3a;"></div>
<div class="a" style="left:1160px;top:869px;width:2px;height:86px;background:#111;"></div>
<div class="a" style="left:1162px;top:869px;width:49px;height:86px;background:#555;"></div>
<svg class="a" style="left:1175px;top:899px;" width="26" height="26" viewBox="0 0 26 26"><rect x="0" y="0" width="22" height="7" fill="#6a6a6a"/><rect x="0" y="8" width="22" height="7" fill="#6a6a6a"/><rect x="0" y="16" width="14" height="7" fill="#6a6a6a"/><path d="M16 14 L25 20 L16 26 Z" fill="#6a6a6a"/></svg>
<div class="a" style="left:343px;top:955px;width:870px;height:2px;background:#111;"></div>
<div class="a" style="left:343px;top:957px;width:400px;height:86px;background:#535353;"></div>
<div class="a" style="left:343px;top:957px;width:2px;height:86px;background:#111;"></div>
<div class="a" style="left:345px;top:957px;width:12px;height:86px;background:#777;"></div>
<div class="t" style="left:369px;top:971px;font-size:22px;color:#f4f4f4;text-align:left;white-space:nowrap;">Master</div>
<div class="a" style="left:572px;top:965px;width:39px;height:31px;background:linear-gradient(#7a7a7a,#656565);border:1.5px solid #3a3a3a;border-radius:7px;"><svg class="a" style="left:8px;top:5px;" width="22" height="22" viewBox="0 0 22 22"><circle cx="11" cy="10.5" r="9.5" fill="#b9b9b9"/></svg></div>
<div class="a" style="left:620px;top:965px;width:39px;height:31px;background:linear-gradient(#7a7a7a,#656565);border:1.5px solid #3a3a3a;border-radius:7px;"><div class="t" style="left:0px;top:5px;font-size:23px;color:#f4f4f4;text-align:center;width:36px;font-weight:bold;">S</div></div>
<div class="a" style="left:668px;top:965px;width:39px;height:31px;background:linear-gradient(#7a7a7a,#656565);border:1.5px solid #3a3a3a;border-radius:7px;"><div class="t" style="left:0px;top:5px;font-size:23px;color:#f4f4f4;text-align:center;width:36px;font-weight:bold;">M</div></div>
<div class="a" style="left:668px;top:1004px;width:39px;height:31px;background:linear-gradient(#7a7a7a,#656565);border:1.5px solid #3a3a3a;border-radius:7px;"><svg class="a" style="left:9px;top:7px;" width="20" height="16" viewBox="0 0 20 16"><rect x="0" y="0" width="19" height="3" fill="#f4f4f4"/><rect x="0" y="6" width="19" height="3" fill="#f4f4f4"/><rect x="0" y="12" width="19" height="3" fill="#f4f4f4"/></svg></div>
<svg class="a" style="left:370px;top:1007px;" width="24" height="22" viewBox="0 0 24 22"><path d="M1 6 L7 12 L12 2 L17 12 L23 6 L21 16 H3 Z" fill="#cfcfcf"/><rect x="3" y="18" width="18" height="3" fill="#cfcfcf"/></svg>
<div class="a" style="left:407px;top:1004px;width:254px;height:33px;background:#1e1e1e;border-radius:9px;"></div>
<div class="a" style="left:411px;top:1008px;width:197px;height:25px;background:#6b3d14;border-radius:6px 0 0 6px;"></div>
<div class="a" style="left:604px;top:1008px;width:4px;height:25px;background:#f18a1f;"></div>
<div class="a" style="left:715px;top:963px;width:22px;height:74px;background:#1e1e1e;"></div>
<div class="a" style="left:743px;top:957px;width:3px;height:86px;background:#111;"></div>
<div class="a" style="left:746px;top:957px;width:50px;height:86px;background:#555;"></div>
<div class="a" style="left:761px;top:991px;width:18px;height:18px;background:#ababab;"></div>
<div class="a" style="left:796px;top:957px;width:1px;height:86px;background:#111;"></div>
<div class="a" style="left:797px;top:957px;width:171px;height:86px;background:#2e2e2e;"></div>
<div class="a" style="left:967px;top:957px;width:1px;height:86px;background:#1c1c1c;"></div>
<div class="a" style="left:807px;top:991px;width:18px;height:18px;background:#474747;"></div>
<div class="a" style="left:969px;top:957px;width:171px;height:86px;background:#2e2e2e;"></div>
<div class="a" style="left:1139px;top:957px;width:1px;height:86px;background:#1c1c1c;"></div>
<div class="a" style="left:979px;top:991px;width:18px;height:18px;background:#474747;"></div>
<div class="a" style="left:1139px;top:957px;width:21px;height:86px;background:#2b2b2b;"></div>
<div class="a" style="left:1143px;top:991px;width:8px;height:18px;background:#3a3a3a;"></div>
<div class="a" style="left:1160px;top:957px;width:2px;height:86px;background:#111;"></div>
<div class="a" style="left:1162px;top:957px;width:49px;height:86px;background:#555;"></div>
<svg class="a" style="left:1175px;top:987px;" width="26" height="26" viewBox="0 0 26 26"><rect x="0" y="0" width="22" height="7" fill="#6a6a6a"/><rect x="0" y="8" width="22" height="7" fill="#6a6a6a"/><rect x="0" y="16" width="14" height="7" fill="#6a6a6a"/><path d="M16 14 L25 20 L16 26 Z" fill="#6a6a6a"/></svg>
<div class="a" style="left:343px;top:1043px;width:870px;height:2px;background:#111;"></div>
<div class="a" style="left:343px;top:627px;width:870px;height:242px;background:#0b0b0b;"></div>
<div class="t" style="left:343px;top:630px;font-size:1px;color:#fff;text-align:left;white-space:nowrap;"></div>
<svg class="a" style="left:530px;top:636px;" width="22" height="22" viewBox="0 0 22 22"><path d="M11 1 V21 M1 11 H21" stroke="#9a9a9a" stroke-width="3.5"/></svg>
<div class="a" style="left:1213px;top:109px;width:10px;height:934px;background:#414141;"></div>
<div class="a" style="left:1223px;top:109px;width:1390px;height:77px;background:#333;"></div>
<div class="a" style="left:1223px;top:186px;width:50px;height:441px;background:#989898;"></div>
<div class="a" style="left:1273px;top:186px;width:1250px;height:441px;background:#a3a3a3;"></div>
<div class="a" style="left:2523px;top:186px;width:90px;height:441px;background:#989898;"></div>
<div class="a" style="left:1223px;top:627px;width:50px;height:242px;background:#8c8c8c;"></div>
<div class="a" style="left:1273px;top:627px;width:1250px;height:242px;background:#8c8c8c;"></div>
<div class="a" style="left:2523px;top:627px;width:90px;height:242px;background:#8c8c8c;"></div>
<div class="a" style="left:1223px;top:869px;width:50px;height:174px;background:#989898;"></div>
<div class="a" style="left:1273px;top:869px;width:1250px;height:174px;background:#a3a3a3;"></div>
<div class="a" style="left:2523px;top:869px;width:90px;height:174px;background:#989898;"></div>
<svg class="a" style="left:1223px;top:186px;" width="1390" height="857" viewBox="0 0 1390 857"><rect x="50" y="0" width="1" height="857" fill="rgba(0,0,0,0.26)"/><rect x="89" y="0" width="1" height="857" fill="rgba(0,0,0,0.07)"/><rect x="128" y="0" width="1" height="857" fill="rgba(0,0,0,0.07)"/><rect x="167" y="0" width="1" height="857" fill="rgba(0,0,0,0.07)"/><rect x="206" y="0" width="1" height="857" fill="rgba(0,0,0,0.26)"/><rect x="245" y="0" width="1" height="857" fill="rgba(0,0,0,0.07)"/><rect x="284" y="0" width="1" height="857" fill="rgba(0,0,0,0.07)"/><rect x="323" y="0" width="1" height="857" fill="rgba(0,0,0,0.07)"/><rect x="362" y="0" width="1" height="857" fill="rgba(0,0,0,0.26)"/><rect x="401" y="0" width="1" height="857" fill="rgba(0,0,0,0.07)"/><rect x="440" y="0" width="1" height="857" fill="rgba(0,0,0,0.07)"/><rect x="479" y="0" width="1" height="857" fill="rgba(0,0,0,0.07)"/><rect x="518" y="0" width="1" height="857" fill="rgba(0,0,0,0.26)"/><rect x="557" y="0" width="1" height="857" fill="rgba(0,0,0,0.07)"/><rect x="596" y="0" width="1" height="857" fill="rgba(0,0,0,0.07)"/><rect x="635" y="0" width="1" height="857" fill="rgba(0,0,0,0.07)"/><rect x="675" y="0" width="1" height="857" fill="rgba(0,0,0,0.26)"/><rect x="714" y="0" width="1" height="857" fill="rgba(0,0,0,0.07)"/><rect x="753" y="0" width="1" height="857" fill="rgba(0,0,0,0.07)"/><rect x="792" y="0" width="1" height="857" fill="rgba(0,0,0,0.07)"/><rect x="831" y="0" width="1" height="857" fill="rgba(0,0,0,0.26)"/><rect x="870" y="0" width="1" height="857" fill="rgba(0,0,0,0.07)"/><rect x="909" y="0" width="1" height="857" fill="rgba(0,0,0,0.07)"/><rect x="948" y="0" width="1" height="857" fill="rgba(0,0,0,0.07)"/><rect x="987" y="0" width="1" height="857" fill="rgba(0,0,0,0.26)"/><rect x="1026" y="0" width="1" height="857" fill="rgba(0,0,0,0.07)"/><rect x="1065" y="0" width="1" height="857" fill="rgba(0,0,0,0.07)"/><rect x="1104" y="0" width="1" height="857" fill="rgba(0,0,0,0.07)"/><rect x="1143" y="0" width="1" height="857" fill="rgba(0,0,0,0.26)"/><rect x="1182" y="0" width="1" height="857" fill="rgba(0,0,0,0.07)"/><rect x="1221" y="0" width="1" height="857" fill="rgba(0,0,0,0.07)"/><rect x="1260" y="0" width="1" height="857" fill="rgba(0,0,0,0.07)"/><rect x="1300" y="0" width="1" height="857" fill="rgba(0,0,0,0.26)"/><rect x="1339" y="0" width="1" height="857" fill="rgba(0,0,0,0.07)"/><rect x="1378" y="0" width="1" height="857" fill="rgba(0,0,0,0.07)"/><rect x="10" y="0" width="1" height="857" fill="rgba(0,0,0,0.1)"/></svg>
<div class="a" style="left:2598px;top:186px;width:15px;height:857px;background:linear-gradient(90deg,rgba(0,0,0,0),rgba(0,0,0,0.33));"></div>
<div class="a" style="left:2613px;top:109px;width:2px;height:934px;background:#1a1a1a;"></div>
<div class="a" style="left:1223px;top:273px;width:1390px;height:2px;background:rgba(0,0,0,0.1);"></div>
<div class="a" style="left:1223px;top:361px;width:1390px;height:2px;background:rgba(0,0,0,0.1);"></div>
<div class="a" style="left:1223px;top:449px;width:1390px;height:2px;background:rgba(0,0,0,0.1);"></div>
<div class="a" style="left:1223px;top:537px;width:1390px;height:2px;background:rgba(0,0,0,0.1);"></div>
<div class="a" style="left:1223px;top:625px;width:1390px;height:2px;background:rgba(0,0,0,0.1);"></div>
<div class="a" style="left:1223px;top:867px;width:1390px;height:2px;background:rgba(0,0,0,0.1);"></div>
<div class="a" style="left:1223px;top:955px;width:1390px;height:2px;background:rgba(0,0,0,0.1);"></div>
<svg class="a" style="left:1223px;top:109px;" width="1390" height="77" viewBox="0 0 1390 77"><rect x="50" y="35" width="1" height="42" fill="#8a8a8a"/><rect x="89" y="48" width="1" height="29" fill="#5a5a5a"/><rect x="128" y="48" width="1" height="29" fill="#5a5a5a"/><rect x="167" y="48" width="1" height="29" fill="#5a5a5a"/><rect x="206" y="35" width="1" height="42" fill="#8a8a8a"/><rect x="245" y="48" width="1" height="29" fill="#5a5a5a"/><rect x="284" y="48" width="1" height="29" fill="#5a5a5a"/><rect x="323" y="48" width="1" height="29" fill="#5a5a5a"/><rect x="362" y="35" width="1" height="42" fill="#8a8a8a"/><rect x="402" y="48" width="1" height="29" fill="#5a5a5a"/><rect x="441" y="48" width="1" height="29" fill="#5a5a5a"/><rect x="480" y="48" width="1" height="29" fill="#5a5a5a"/><rect x="519" y="35" width="1" height="42" fill="#8a8a8a"/><rect x="558" y="48" width="1" height="29" fill="#5a5a5a"/><rect x="597" y="48" width="1" height="29" fill="#5a5a5a"/><rect x="636" y="48" width="1" height="29" fill="#5a5a5a"/><rect x="675" y="35" width="1" height="42" fill="#8a8a8a"/><rect x="714" y="48" width="1" height="29" fill="#5a5a5a"/><rect x="753" y="48" width="1" height="29" fill="#5a5a5a"/><rect x="792" y="48" width="1" height="29" fill="#5a5a5a"/><rect x="831" y="35" width="1" height="42" fill="#8a8a8a"/><rect x="870" y="48" width="1" height="29" fill="#5a5a5a"/><rect x="909" y="48" width="1" height="29" fill="#5a5a5a"/><rect x="948" y="48" width="1" height="29" fill="#5a5a5a"/><rect x="988" y="35" width="1" height="42" fill="#8a8a8a"/><rect x="1027" y="48" width="1" height="29" fill="#5a5a5a"/><rect x="1066" y="48" width="1" height="29" fill="#5a5a5a"/><rect x="1105" y="48" width="1" height="29" fill="#5a5a5a"/><rect x="1144" y="35" width="1" height="42" fill="#8a8a8a"/><rect x="1183" y="48" width="1" height="29" fill="#5a5a5a"/><rect x="1222" y="48" width="1" height="29" fill="#5a5a5a"/><rect x="1261" y="48" width="1" height="29" fill="#5a5a5a"/><rect x="1300" y="35" width="1" height="42" fill="#8a8a8a"/><rect x="1339" y="48" width="1" height="29" fill="#5a5a5a"/><rect x="1378" y="48" width="1" height="29" fill="#5a5a5a"/><rect x="10" y="49" width="1" height="28" fill="#5a5a5a"/></svg>
<div class="t" style="left:1279px;top:136px;font-size:21px;color:#f4f4f4;text-align:left;white-space:nowrap;">1.1</div>
<div class="t" style="left:1435px;top:136px;font-size:21px;color:#f4f4f4;text-align:left;white-space:nowrap;">1.2</div>
<div class="t" style="left:1592px;top:136px;font-size:21px;color:#f4f4f4;text-align:left;white-space:nowrap;">1.3</div>
<div class="t" style="left:1748px;top:136px;font-size:21px;color:#f4f4f4;text-align:left;white-space:nowrap;">1.4</div>
<div class="t" style="left:1904px;top:136px;font-size:21px;color:#f4f4f4;text-align:left;white-space:nowrap;">2.1</div>
<div class="t" style="left:2060px;top:136px;font-size:21px;color:#f4f4f4;text-align:left;white-space:nowrap;">2.2</div>
<div class="t" style="left:2216px;top:136px;font-size:21px;color:#f4f4f4;text-align:left;white-space:nowrap;">2.3</div>
<div class="t" style="left:2373px;top:136px;font-size:21px;color:#f4f4f4;text-align:left;white-space:nowrap;">2.4</div>
<div class="t" style="left:2529px;top:136px;font-size:21px;color:#f4f4f4;text-align:left;white-space:nowrap;">3.1</div>
<div class="a" style="left:1273px;top:160px;width:1251px;height:24px;background:linear-gradient(#6e6e6e,#626262);border:2px solid #bdbdbd;border-right:2px solid #bdbdbd;"></div>
<svg class="a" style="left:1273px;top:113px;" width="18" height="24" viewBox="0 0 18 24"><path d="M0 0 L17 11.5 L0 23 Z" fill="#3ba4e0"/></svg>
<div class="a" style="left:1273px;top:187px;width:1251px;height:86px;background:#c9a373;border:1.5px solid #111;"></div>
<div class="a" style="left:1274px;top:188px;width:1249px;height:41px;background:linear-gradient(#cba574,#bf9766);"></div>
<div class="t" style="left:1287px;top:203px;font-size:22px;color:#3a2b1c;text-align:left;white-space:nowrap;">707 Back To 90s Beat 01 A</div>
<div class="a" style="left:1273px;top:363px;width:1251px;height:86px;background:#c9a373;border:1.5px solid #111;"></div>
<div class="a" style="left:1274px;top:364px;width:1249px;height:41px;background:linear-gradient(#cba574,#bf9766);"></div>
<div class="t" style="left:1287px;top:379px;font-size:22px;color:#3a2b1c;text-align:left;white-space:nowrap;">Grid Randrops 120bpm</div>
<div class="a" style="left:1273px;top:450px;width:1251px;height:88px;background:#5a62c8;border:1.5px solid #111;"></div>
<div class="a" style="left:1274px;top:451px;width:1249px;height:41px;background:linear-gradient(#5e66cc,#555cc0);"></div>
<div class="t" style="left:1287px;top:466px;font-size:22px;color:#1c2268;text-align:left;white-space:nowrap;">Hooperbag</div>
<svg class="a" style="left:1273px;top:187px;" width="1250" height="87" viewBox="0 0 1250 87"><rect x="1" y="73" width="16" height="4" fill="#8e6e4a"/><rect x="1" y="78" width="16" height="4" fill="#7d5f3c"/><rect x="39" y="73" width="17" height="4" fill="#8e6e4a"/><rect x="78" y="73" width="17" height="4" fill="#8e6e4a"/><rect x="117" y="73" width="17" height="4" fill="#8e6e4a"/><rect x="156" y="51" width="17" height="4" fill="#8e6e4a"/><rect x="156" y="78" width="17" height="4" fill="#7d5f3c"/><rect x="195" y="78" width="17" height="4" fill="#7d5f3c"/><rect x="234" y="73" width="17" height="4" fill="#8e6e4a"/><rect x="273" y="78" width="17" height="4" fill="#7d5f3c"/><rect x="312" y="73" width="18" height="4" fill="#8e6e4a"/><rect x="312" y="78" width="18" height="4" fill="#7d5f3c"/><rect x="390" y="73" width="18" height="4" fill="#8e6e4a"/><rect x="468" y="73" width="18" height="4" fill="#8e6e4a"/><rect x="468" y="78" width="18" height="4" fill="#7d5f3c"/><rect x="546" y="74" width="18" height="7" fill="#7d5f3c"/><rect x="625" y="73" width="17" height="4" fill="#8e6e4a"/><rect x="625" y="78" width="17" height="4" fill="#7d5f3c"/><rect x="703" y="51" width="17" height="4" fill="#8e6e4a"/><rect x="703" y="73" width="17" height="4" fill="#8e6e4a"/><rect x="781" y="74" width="17" height="7" fill="#7d5f3c"/><rect x="859" y="73" width="17" height="4" fill="#8e6e4a"/><rect x="937" y="73" width="18" height="4" fill="#8e6e4a"/><rect x="937" y="78" width="18" height="4" fill="#7d5f3c"/><rect x="976" y="78" width="18" height="4" fill="#7d5f3c"/><rect x="1015" y="73" width="18" height="4" fill="#8e6e4a"/><rect x="1015" y="78" width="18" height="4" fill="#7d5f3c"/><rect x="1054" y="78" width="18" height="4" fill="#7d5f3c"/><rect x="1093" y="73" width="18" height="4" fill="#8e6e4a"/><rect x="1093" y="78" width="18" height="4" fill="#7d5f3c"/><rect x="1113" y="73" width="17" height="4" fill="#8e6e4a"/><rect x="1132" y="73" width="17" height="4" fill="#8e6e4a"/><rect x="1132" y="78" width="17" height="4" fill="#7d5f3c"/><rect x="1171" y="73" width="18" height="4" fill="#8e6e4a"/><rect x="1171" y="78" width="18" height="4" fill="#7d5f3c"/><rect x="1191" y="73" width="17" height="4" fill="#8e6e4a"/><rect x="1191" y="78" width="17" height="4" fill="#7d5f3c"/><rect x="1210" y="73" width="17" height="4" fill="#8e6e4a"/><rect x="1210" y="78" width="17" height="4" fill="#7d5f3c"/><rect x="1230" y="73" width="18" height="4" fill="#8e6e4a"/><rect x="1230" y="78" width="18" height="4" fill="#7d5f3c"/></svg>
<svg class="a" style="left:1273px;top:363px;" width="1250" height="86" viewBox="0 0 1250 86"><line x1="0" y1="64.5" x2="1250" y2="64.5" stroke="#3b2a18" stroke-width="1.4"/><rect x="1" y="55.5" width="1.4" height="18.0" fill="#3b2a18"/><rect x="3" y="55.6" width="1.4" height="17.7" fill="#3b2a18"/><rect x="5" y="54.9" width="1.4" height="19.2" fill="#3b2a18"/><rect x="7" y="57.1" width="1.4" height="14.8" fill="#3b2a18"/><rect x="9" y="57.5" width="1.4" height="14.0" fill="#3b2a18"/><rect x="11" y="57.8" width="1.4" height="13.4" fill="#3b2a18"/><rect x="13" y="59.3" width="1.4" height="10.3" fill="#3b2a18"/><rect x="15" y="59.0" width="1.4" height="11.1" fill="#3b2a18"/><rect x="17" y="59.2" width="1.4" height="10.6" fill="#3b2a18"/><rect x="19" y="59.3" width="1.4" height="10.3" fill="#3b2a18"/><rect x="21" y="61.0" width="1.4" height="7.0" fill="#3b2a18"/><rect x="23" y="61.0" width="1.4" height="6.9" fill="#3b2a18"/><rect x="25" y="61.6" width="1.4" height="5.7" fill="#3b2a18"/><rect x="27" y="61.1" width="1.4" height="6.7" fill="#3b2a18"/><rect x="29" y="61.6" width="1.4" height="5.7" fill="#3b2a18"/><rect x="31" y="62.5" width="1.4" height="4.0" fill="#3b2a18"/><rect x="33" y="62.1" width="1.4" height="4.7" fill="#3b2a18"/><rect x="35" y="62.5" width="1.4" height="4.0" fill="#3b2a18"/><rect x="37" y="62.9" width="1.4" height="3.2" fill="#3b2a18"/><rect x="39" y="63.2" width="1.4" height="2.7" fill="#3b2a18"/><rect x="41" y="63.4" width="1.4" height="2.1" fill="#3b2a18"/><rect x="43" y="63.6" width="1.4" height="1.9" fill="#3b2a18"/><rect x="1" y="54" width="3" height="21" fill="#3b2a18"/><rect x="103" y="52.5" width="1.6" height="24" fill="#3b2a18"/><path d="M103 58 L110 64.5 L103 71 Z" fill="#3b2a18"/><rect x="156" y="55.2" width="1.4" height="18.6" fill="#3b2a18"/><rect x="158" y="57.6" width="1.4" height="13.8" fill="#3b2a18"/><rect x="160" y="57.6" width="1.4" height="13.9" fill="#3b2a18"/><rect x="162" y="57.8" width="1.4" height="13.3" fill="#3b2a18"/><rect x="164" y="59.0" width="1.4" height="11.1" fill="#3b2a18"/><rect x="166" y="58.1" width="1.4" height="12.7" fill="#3b2a18"/><rect x="168" y="58.7" width="1.4" height="11.6" fill="#3b2a18"/><rect x="170" y="58.2" width="1.4" height="12.6" fill="#3b2a18"/><rect x="172" y="59.4" width="1.4" height="10.2" fill="#3b2a18"/><rect x="174" y="59.6" width="1.4" height="9.7" fill="#3b2a18"/><rect x="176" y="60.3" width="1.4" height="8.3" fill="#3b2a18"/><rect x="178" y="60.5" width="1.4" height="8.0" fill="#3b2a18"/><rect x="180" y="61.2" width="1.4" height="6.7" fill="#3b2a18"/><rect x="182" y="61.7" width="1.4" height="5.5" fill="#3b2a18"/><rect x="184" y="61.4" width="1.4" height="6.3" fill="#3b2a18"/><rect x="186" y="61.8" width="1.4" height="5.5" fill="#3b2a18"/><rect x="188" y="62.2" width="1.4" height="4.5" fill="#3b2a18"/><rect x="190" y="62.6" width="1.4" height="3.8" fill="#3b2a18"/><rect x="192" y="63.0" width="1.4" height="2.9" fill="#3b2a18"/><rect x="194" y="63.3" width="1.4" height="2.5" fill="#3b2a18"/><rect x="196" y="63.4" width="1.4" height="2.2" fill="#3b2a18"/><rect x="198" y="63.6" width="1.4" height="1.9" fill="#3b2a18"/><rect x="156" y="54" width="3" height="21" fill="#3b2a18"/><path d="M235 55 L246 64.5 L235 74 Z" fill="#3b2a18"/><path d="M261 55 L272 64.5 L261 74 Z" fill="#3b2a18"/><path d="M299 58 L308 64 L299 71 Z" fill="#3b2a18"/><rect x="312" y="54.2" width="1.4" height="20.6" fill="#3b2a18"/><rect x="314" y="56.3" width="1.4" height="16.5" fill="#3b2a18"/><rect x="316" y="55.2" width="1.4" height="18.6" fill="#3b2a18"/><rect x="318" y="57.4" width="1.4" height="14.3" fill="#3b2a18"/><rect x="320" y="56.1" width="1.4" height="16.8" fill="#3b2a18"/><rect x="322" y="57.0" width="1.4" height="14.9" fill="#3b2a18"/><rect x="324" y="59.8" width="1.4" height="9.4" fill="#3b2a18"/><rect x="326" y="59.7" width="1.4" height="9.6" fill="#3b2a18"/><rect x="328" y="58.6" width="1.4" height="11.8" fill="#3b2a18"/><rect x="330" y="60.0" width="1.4" height="9.1" fill="#3b2a18"/><rect x="332" y="59.5" width="1.4" height="10.0" fill="#3b2a18"/><rect x="334" y="60.9" width="1.4" height="7.2" fill="#3b2a18"/><rect x="336" y="61.7" width="1.4" height="5.7" fill="#3b2a18"/><rect x="338" y="61.3" width="1.4" height="6.3" fill="#3b2a18"/><rect x="340" y="61.6" width="1.4" height="5.9" fill="#3b2a18"/><rect x="342" y="62.3" width="1.4" height="4.3" fill="#3b2a18"/><rect x="344" y="62.7" width="1.4" height="3.6" fill="#3b2a18"/><rect x="346" y="62.8" width="1.4" height="3.4" fill="#3b2a18"/><rect x="348" y="62.8" width="1.4" height="3.4" fill="#3b2a18"/><rect x="350" y="63.1" width="1.4" height="2.8" fill="#3b2a18"/><rect x="352" y="63.4" width="1.4" height="2.1" fill="#3b2a18"/><rect x="354" y="63.6" width="1.4" height="1.9" fill="#3b2a18"/><rect x="312" y="54" width="3" height="21" fill="#3b2a18"/><rect x="363" y="52.5" width="1.6" height="24" fill="#3b2a18"/><path d="M363 58 L370 64.5 L363 71 Z" fill="#3b2a18"/><rect x="429" y="52.5" width="1.6" height="24" fill="#3b2a18"/><path d="M429 58 L436 64.5 L429 71 Z" fill="#3b2a18"/><rect x="468" y="57.0" width="1.4" height="15.0" fill="#3b2a18"/><rect x="470" y="57.6" width="1.4" height="13.8" fill="#3b2a18"/><rect x="472" y="55.4" width="1.4" height="18.3" fill="#3b2a18"/><rect x="474" y="58.1" width="1.4" height="12.9" fill="#3b2a18"/><rect x="476" y="57.3" width="1.4" height="14.3" fill="#3b2a18"/><rect x="478" y="58.2" width="1.4" height="12.7" fill="#3b2a18"/><rect x="480" y="59.3" width="1.4" height="10.4" fill="#3b2a18"/><rect x="482" y="58.5" width="1.4" height="12.1" fill="#3b2a18"/><rect x="484" y="60.2" width="1.4" height="8.5" fill="#3b2a18"/><rect x="486" y="59.6" width="1.4" height="9.7" fill="#3b2a18"/><rect x="488" y="61.0" width="1.4" height="7.1" fill="#3b2a18"/><rect x="490" y="60.9" width="1.4" height="7.3" fill="#3b2a18"/><rect x="492" y="61.5" width="1.4" height="6.0" fill="#3b2a18"/><rect x="494" y="61.7" width="1.4" height="5.5" fill="#3b2a18"/><rect x="496" y="61.4" width="1.4" height="6.2" fill="#3b2a18"/><rect x="498" y="61.9" width="1.4" height="5.2" fill="#3b2a18"/><rect x="500" y="62.6" width="1.4" height="3.9" fill="#3b2a18"/><rect x="502" y="62.5" width="1.4" height="3.9" fill="#3b2a18"/><rect x="504" y="63.1" width="1.4" height="2.9" fill="#3b2a18"/><rect x="506" y="63.2" width="1.4" height="2.6" fill="#3b2a18"/><rect x="508" y="63.3" width="1.4" height="2.4" fill="#3b2a18"/><rect x="510" y="63.5" width="1.4" height="2.0" fill="#3b2a18"/><rect x="468" y="54" width="3" height="21" fill="#3b2a18"/><path d="M514 58 L523 64 L514 71 Z" fill="#3b2a18"/><path d="M537 58 L546 64 L537 71 Z" fill="#3b2a18"/><path d="M553 55 L564 64.5 L553 74 Z" fill="#3b2a18"/><rect x="672" y="52.5" width="1.6" height="24" fill="#3b2a18"/><path d="M672 58 L679 64.5 L672 71 Z" fill="#3b2a18"/><rect x="731" y="52.5" width="1.6" height="24" fill="#3b2a18"/><path d="M731 58 L738 64.5 L731 71 Z" fill="#3b2a18"/><path d="M788 55 L799 64.5 L788 74 Z" fill="#3b2a18"/><rect x="856" y="52.5" width="1.6" height="24" fill="#3b2a18"/><path d="M856 58 L863 64.5 L856 71 Z" fill="#3b2a18"/><rect x="901" y="52.5" width="1.6" height="24" fill="#3b2a18"/><path d="M901 58 L908 64.5 L901 71 Z" fill="#3b2a18"/><path d="M935 55 L946 64.5 L935 74 Z" fill="#3b2a18"/><rect x="1066" y="52.5" width="1.6" height="24" fill="#3b2a18"/><path d="M1066 58 L1073 64.5 L1066 71 Z" fill="#3b2a18"/><rect x="1093" y="57.0" width="1.4" height="15.0" fill="#3b2a18"/><rect x="1095" y="54.0" width="1.4" height="21.1" fill="#3b2a18"/><rect x="1097" y="57.5" width="1.4" height="14.0" fill="#3b2a18"/><rect x="1099" y="57.8" width="1.4" height="13.4" fill="#3b2a18"/><rect x="1101" y="56.7" width="1.4" height="15.7" fill="#3b2a18"/><rect x="1103" y="58.5" width="1.4" height="12.0" fill="#3b2a18"/><rect x="1105" y="59.0" width="1.4" height="10.9" fill="#3b2a18"/><rect x="1107" y="60.0" width="1.4" height="9.0" fill="#3b2a18"/><rect x="1109" y="60.3" width="1.4" height="8.3" fill="#3b2a18"/><rect x="1111" y="59.7" width="1.4" height="9.5" fill="#3b2a18"/><rect x="1113" y="60.8" width="1.4" height="7.5" fill="#3b2a18"/><rect x="1115" y="60.6" width="1.4" height="7.8" fill="#3b2a18"/><rect x="1117" y="61.3" width="1.4" height="6.4" fill="#3b2a18"/><rect x="1119" y="61.5" width="1.4" height="5.9" fill="#3b2a18"/><rect x="1121" y="61.4" width="1.4" height="6.2" fill="#3b2a18"/><rect x="1123" y="62.2" width="1.4" height="4.7" fill="#3b2a18"/><rect x="1125" y="62.4" width="1.4" height="4.2" fill="#3b2a18"/><rect x="1127" y="62.5" width="1.4" height="3.9" fill="#3b2a18"/><rect x="1129" y="63.1" width="1.4" height="2.8" fill="#3b2a18"/><rect x="1131" y="63.3" width="1.4" height="2.4" fill="#3b2a18"/><rect x="1133" y="63.3" width="1.4" height="2.4" fill="#3b2a18"/><rect x="1135" y="63.5" width="1.4" height="2.0" fill="#3b2a18"/><rect x="1093" y="54" width="3" height="21" fill="#3b2a18"/><rect x="1151" y="52.5" width="1.6" height="24" fill="#3b2a18"/><path d="M1151 58 L1158 64.5 L1151 71 Z" fill="#3b2a18"/><path d="M1172 55 L1183 64.5 L1172 74 Z" fill="#3b2a18"/><path d="M1191 55 L1202 64.5 L1191 74 Z" fill="#3b2a18"/><path d="M1210 55 L1221 64.5 L1210 74 Z" fill="#3b2a18"/></svg>
<svg class="a" style="left:2488px;top:375px;" width="24" height="12" viewBox="0 0 24 12"><rect x="0" y="0" width="13" height="5" fill="#3b2a18"/><rect x="16" y="0" width="7" height="5" fill="#3b2a18"/><rect x="10" y="5" width="6" height="6" fill="#3b2a18"/></svg>
<svg class="a" style="left:1273px;top:450px;" width="1250" height="88" viewBox="0 0 1250 88"><rect x="234" y="50" width="75" height="4" fill="#2d3388"/><rect x="312" y="51" width="154" height="4" fill="#2d3388"/><rect x="585" y="51" width="38" height="4" fill="#2d3388"/><rect x="78" y="53" width="310" height="4" fill="#2d3388"/><rect x="468" y="53" width="37" height="4" fill="#2d3388"/><rect x="1" y="58" width="153" height="4" fill="#2d3388"/><rect x="157" y="58" width="114" height="4" fill="#2d3388"/><rect x="390" y="58" width="154" height="4" fill="#2d3388"/><rect x="273" y="62" width="350" height="4" fill="#2d3388"/><rect x="1" y="63.5" width="153" height="3.5" fill="#2d3388"/><rect x="546" y="63" width="81" height="4" fill="#2d3388"/><rect x="117" y="64.5" width="37" height="6.0" fill="#2d3388"/><rect x="234" y="64.5" width="37" height="4.0" fill="#2d3388"/><rect x="468" y="65" width="155" height="6" fill="#2d3388"/><rect x="78" y="72" width="230" height="3.5" fill="#2d3388"/><rect x="117" y="74" width="37" height="4.5" fill="#2d3388"/><rect x="78" y="77.5" width="37" height="4.0" fill="#2d3388"/><rect x="273" y="77.5" width="37" height="4.0" fill="#2d3388"/><rect x="313" y="77.5" width="310" height="4.0" fill="#2d3388"/><rect x="1" y="81" width="75" height="4" fill="#2d3388"/><rect x="617" y="51" width="6" height="4" fill="#2d3388"/><rect x="703" y="51" width="232" height="4" fill="#2d3388"/><rect x="1093" y="51" width="155" height="4" fill="#2d3388"/><rect x="664" y="54" width="37" height="4" fill="#2d3388"/><rect x="937" y="54" width="154" height="4" fill="#2d3388"/><rect x="1210" y="53.5" width="38" height="4.0" fill="#2d3388"/><rect x="703" y="56" width="232" height="4" fill="#2d3388"/><rect x="623" y="58" width="78" height="7.5" fill="#2d3388"/><rect x="937" y="59.5" width="76" height="3.5" fill="#2d3388"/><rect x="781" y="62" width="37" height="3.5" fill="#2d3388"/><rect x="898" y="62" width="37" height="3.5" fill="#2d3388"/><rect x="1015" y="62" width="193" height="3.5" fill="#2d3388"/><rect x="859" y="64" width="154" height="3" fill="#2d3388"/><rect x="1170" y="64" width="78" height="3" fill="#2d3388"/><rect x="1015" y="67" width="154" height="4" fill="#2d3388"/><rect x="625" y="69" width="74" height="4" fill="#2d3388"/><rect x="703" y="69" width="154" height="4" fill="#2d3388"/><rect x="1093" y="71.5" width="155" height="4.5" fill="#2d3388"/><rect x="742" y="73" width="36" height="4" fill="#2d3388"/><rect x="937" y="73" width="153" height="4" fill="#2d3388"/><rect x="859" y="75" width="76" height="3.5" fill="#2d3388"/><rect x="1054" y="75" width="36" height="3.5" fill="#2d3388"/><rect x="625" y="80" width="232" height="3.5" fill="#2d3388"/><rect x="1210" y="80" width="38" height="3.5" fill="#2d3388"/></svg>
<div class="a" style="left:343px;top:1043px;width:2272px;height:48px;background:#414141;"></div>
<div class="a" style="left:343px;top:1042px;width:2270px;height:2px;background:#151515;"></div>
<svg class="a" style="left:358px;top:1060px;" width="17" height="16" viewBox="0 0 17 16"><path d="M16 4 H3 M7 0 L2 4 L7 8 M1 12 H14 M10 8 L15 12 L10 16" stroke="#bdbdbd" stroke-width="2" fill="none"/></svg>
<div class="a" style="left:389px;top:1053px;width:34px;height:31px;background:#3b3b3b;border-radius:4px;"></div>
<svg class="a" style="left:395px;top:1061px;" width="23" height="15" viewBox="0 0 23 15"><rect x="0" y="0" width="9" height="3" fill="#f08a24"/><rect x="0" y="6" width="9" height="3" fill="#f08a24"/><rect x="0" y="12" width="9" height="3" fill="#f08a24"/><rect x="11" y="0" width="12" height="7" fill="#f08a24"/><rect x="11" y="8" width="12" height="7" fill="#f08a24"/></svg>
<div class="a" style="left:430px;top:1053px;width:34px;height:31px;background:#3b3b3b;border-radius:4px;"></div>
<svg class="a" style="left:438px;top:1058px;" width="20" height="20" viewBox="0 0 20 20"><path d="M1 2 H10 V17 M4 12 L10 18 L16 12" stroke="#f08a24" stroke-width="3" fill="none"/></svg>
<div class="a" style="left:470px;top:1053px;width:34px;height:31px;background:#3b3b3b;border-radius:4px;"></div>
<svg class="a" style="left:478px;top:1060px;" width="17" height="17" viewBox="0 0 17 17"><path d="M1 1 L16 16 M16 1 L1 16" stroke="#f08a24" stroke-width="3.2"/></svg>
<svg class="a" style="left:753px;top:1060px;" width="14" height="17" viewBox="0 0 14 17"><path d="M14 0 L0 8.5 L14 17 Z" fill="#a9a9a9"/></svg>
<div class="a" style="left:781px;top:1056px;width:69px;height:25px;background:#777;border-radius:8px;"></div>
<svg class="a" style="left:1190px;top:1060px;" width="14" height="17" viewBox="0 0 14 17"><path d="M0 0 L14 8.5 L0 17 Z" fill="#a9a9a9"/></svg>
<svg class="a" style="left:1233px;top:1060px;" width="14" height="17" viewBox="0 0 14 17"><path d="M14 0 L0 8.5 L14 17 Z" fill="#a9a9a9"/></svg>
<div class="a" style="left:1261px;top:1056px;width:1003px;height:25px;background:#777;border-radius:8px;"></div>
<svg class="a" style="left:2278px;top:1060px;" width="14" height="17" viewBox="0 0 14 17"><path d="M0 0 L14 8.5 L0 17 Z" fill="#a9a9a9"/></svg>
<div class="a" style="left:2308px;top:1052px;width:41px;height:33px;background:#3b3b3b;border-radius:4px;"></div>
<svg class="a" style="left:2314px;top:1055px;" width="28" height="27" viewBox="0 0 28 27"><circle cx="18" cy="6" r="4" fill="none" stroke="#f08a24" stroke-width="2.5"/><path d="M16 9 L10 15" stroke="#f08a24" stroke-width="2.5"/><rect x="2" y="13" width="12" height="7" rx="3.5" fill="none" stroke="#f08a24" stroke-width="2.5"/><rect x="10" y="19" width="14" height="7" rx="3.5" fill="none" stroke="#f08a24" stroke-width="2.5"/></svg>
<div class="t" style="left:2459px;top:1058px;font-size:22px;color:#e8e8e8;text-align:left;white-space:nowrap;">1/16</div>
<svg class="a" style="left:2510px;top:1063px;" width="11" height="7" viewBox="0 0 11 7"><path d="M0 7 L5.5 0 L11 7 Z" fill="#d0d0d0"/></svg>
<div class="a" style="left:2533px;top:1052px;width:38px;height:33px;background:#3b3b3b;border-radius:4px;"></div>
<svg class="a" style="left:2539px;top:1058px;" width="26" height="22" viewBox="0 0 26 22"><path d="M0 3 L9 11 L0 19 Z M26 3 L17 11 L26 19 Z" fill="#f08a24"/><rect x="12" y="0" width="2.5" height="22" fill="#f08a24"/></svg>
<svg class="a" style="left:2585px;top:1055px;" width="20" height="24" viewBox="0 0 20 24"><path d="M3 6 H17 M13 2 L18 6 L13 10" stroke="#b8b8b8" stroke-width="2" fill="none"/><path d="M3 14 V23 M8 16 V23 M13 14 V23" stroke="#b8b8b8" stroke-width="2"/></svg>
<div class="a" style="left:339px;top:1101px;width:2280px;height:494px;background:#0b0b0b;border:4px solid #585858;border-radius:7px;"></div>
<div class="a" style="left:343px;top:1105px;width:8px;height:486px;background:#6262d8;"></div>
<div class="t" style="left:379px;top:1347px;font-size:24px;color:#f0f0f0;transform:translate(-50%,-50%) rotate(-90deg);letter-spacing:-1.2px;">ORGAN</div>
<svg class="a" style="left:415px;top:1336px;" width="22" height="22" viewBox="0 0 22 22"><path d="M11 1 V21 M1 11 H21" stroke="#9a9a9a" stroke-width="3.5"/></svg>
<div class="a" style="left:447px;top:1129px;width:508px;height:437px;background:#525252;border-radius:12px 0 0 12px;"></div>
<div class="a" style="left:447px;top:1129px;width:54px;height:437px;background:#424242;border-radius:12px 0 0 12px;"></div>
<svg class="a" style="left:462px;top:1144px;" width="24" height="24" viewBox="0 0 24 24"><path d="M6.5 6 A9 9 0 1 0 17.5 6" fill="none" stroke="#f08a24" stroke-width="3.2"/><line x1="12" y1="1.5" x2="12" y2="11" stroke="#f08a24" stroke-width="3.2"/></svg>
<svg class="a" style="left:463px;top:1189px;" width="24" height="20" viewBox="0 0 24 20"><rect x="0" y="0" width="9" height="4" fill="#a8a8a8"/><rect x="0" y="3" width="23" height="16" fill="#a8a8a8"/><rect x="0" y="3" width="10" height="2" fill="#454545"/></svg>
<div class="t" style="left:473px;top:1347px;font-size:23px;color:#f0f0f0;transform:translate(-50%,-50%) rotate(-90deg);letter-spacing:-2px;">HOOPERBAG</div>
<svg class="a" style="left:463px;top:1467px;" width="22" height="22" viewBox="0 0 22 22"><path d="M1 2 H10 V18 M4 12 L10 19 L16 12" stroke="#f08a24" stroke-width="3" fill="none"/></svg>
<svg class="a" style="left:461px;top:1499px;" width="25.5" height="17.0" viewBox="0 0 25.5 17.0"><circle cx="4.25" cy="4.25" r="3.2" fill="#f08a24"/><circle cx="4.25" cy="12.75" r="3.2" fill="#f08a24"/><circle cx="12.75" cy="4.25" r="3.2" fill="#f08a24"/><circle cx="12.75" cy="12.75" r="3.2" fill="#f08a24"/><circle cx="21.25" cy="4.25" r="3.2" fill="#f08a24"/><circle cx="21.25" cy="12.75" r="3.2" fill="#f08a24"/></svg>
<svg class="a" style="left:460.4px;top:1537.6px;" width="28.8" height="12.8" viewBox="0 0 28.8 12.8"><g transform="scale(0.8)"><circle cx="7" cy="8" r="6.8" fill="#9a9a9a"/><rect x="8" y="6" width="18" height="4" fill="#9a9a9a"/><path d="M24.5 0 L35 8 L24.5 16 Z" fill="#9a9a9a"/></g></svg>
<div class="a" style="left:507px;top:1135px;width:441px;height:42px;background:#333;border-radius:8px;"></div>
<svg class="a" style="left:518px;top:1147px;" width="24" height="16" viewBox="0 0 24 16"><circle cx="4.0" cy="4.0" r="2.6" fill="#f4f4f4"/><circle cx="4.0" cy="12.0" r="2.6" fill="#f4f4f4"/><circle cx="12.0" cy="4.0" r="2.6" fill="#f4f4f4"/><circle cx="12.0" cy="12.0" r="2.6" fill="#f4f4f4"/><circle cx="20.0" cy="4.0" r="2.6" fill="#f4f4f4"/><circle cx="20.0" cy="12.0" r="2.6" fill="#f4f4f4"/></svg>
<div class="t" style="left:552px;top:1145px;font-size:22px;color:#f6f6f6;text-align:left;white-space:nowrap;">Perform <span style="color:#9d9d9d">(preset page)</span></div>
<svg class="a" style="left:834px;top:1143px;" width="26" height="26" viewBox="0 0 26 26"><line x1="9" y1="9" x2="21" y2="21" stroke="#f6f6f6" stroke-width="5" stroke-linecap="round"/><path d="M3 6 L8 1.5 L14 3.5 L15.5 9.5 L10 14 L4 12 Z" fill="#f6f6f6"/><path d="M4 4 L9 9" stroke="#333" stroke-width="3"/><circle cx="20" cy="20" r="1" fill="#333"/></svg>
<div class="a" style="left:869px;top:1137px;width:39px;height:39px;background:linear-gradient(#747474,#626262);"></div>
<div class="a" style="left:907px;top:1137px;width:2px;height:39px;background:#2a2a2a;"></div>
<div class="a" style="left:909px;top:1137px;width:38px;height:39px;background:linear-gradient(#747474,#626262);border-radius:0 7px 7px 0;"></div>
<svg class="a" style="left:881px;top:1151px;" width="14" height="10" viewBox="0 0 14 10"><path d="M0 10 L7 0 L14 10 Z" fill="#f4f4f4"/></svg>
<svg class="a" style="left:921px;top:1151px;" width="14" height="10" viewBox="0 0 14 10"><path d="M0 0 L7 10 L14 0 Z" fill="#f4f4f4"/></svg>
<div class="a" style="left:507px;top:1183px;width:106px;height:186px;background:#414141;border-radius:9px;"></div>
<div class="a" style="left:507px;top:1359px;width:106px;height:10px;background:#e8203f;border-radius:0 0 9px 9px;"></div>
<svg class="a" style="left:543.0px;top:1193.0px;" width="36.0" height="16.0" viewBox="0 0 36.0 16.0"><g transform="scale(1.0)"><circle cx="7" cy="8" r="6.8" fill="#38c8f4"/><rect x="8" y="6" width="18" height="4" fill="#38c8f4"/><path d="M24.5 0 L35 8 L24.5 16 Z" fill="#38c8f4"/></g></svg>
<svg class="a" style="left:511.0px;top:1223.0px;" width="98" height="98" viewBox="0 0 98 98"><path d="M19.7 78.3 A41.5 41.5 0 1 1 78.3 78.3" fill="none" stroke="#585858" stroke-width="5"/><path d="M47.6 7.5 A41.5 41.5 0 0 1 50.4 7.5" fill="none" stroke="#f08a24" stroke-width="5"/><circle cx="49.0" cy="49.0" r="35.0" fill="#2e2e2e"/><defs><linearGradient id="g560_1272" x1="0" y1="0" x2="0" y2="1"><stop offset="0" stop-color="#a9a9a9"/><stop offset="1" stop-color="#5c5c5c"/></linearGradient></defs><circle cx="49.0" cy="49.0" r="31.5" fill="url(#g560_1272)"/><line x1="49.0" y1="40.2" x2="49.0" y2="18.4" stroke="#eeeeee" stroke-width="5.5"/></svg>
<div class="t" style="left:507px;top:1327px;font-size:22px;color:#f6f6f6;text-align:center;width:106px;">Pitch</div>
<div class="a" style="left:619px;top:1183px;width:106px;height:186px;background:#414141;border-radius:9px;"></div>
<div class="a" style="left:619px;top:1359px;width:106px;height:10px;background:#f07d18;border-radius:0 0 9px 9px;"></div>
<svg class="a" style="left:655.0px;top:1193.0px;" width="36.0" height="16.0" viewBox="0 0 36.0 16.0"><g transform="scale(1.0)"><circle cx="7" cy="8" r="6.8" fill="#38c8f4"/><rect x="8" y="6" width="18" height="4" fill="#38c8f4"/><path d="M24.5 0 L35 8 L24.5 16 Z" fill="#38c8f4"/></g></svg>
<svg class="a" style="left:623.0px;top:1223.0px;" width="98" height="98" viewBox="0 0 98 98"><path d="M19.7 78.3 A41.5 41.5 0 1 1 78.3 78.3" fill="none" stroke="#585858" stroke-width="5"/><circle cx="49.0" cy="49.0" r="35.0" fill="#2e2e2e"/><defs><linearGradient id="g672_1272" x1="0" y1="0" x2="0" y2="1"><stop offset="0" stop-color="#a9a9a9"/><stop offset="1" stop-color="#5c5c5c"/></linearGradient></defs><circle cx="49.0" cy="49.0" r="31.5" fill="url(#g672_1272)"/><line x1="43.3" y1="55.8" x2="29.4" y2="72.4" stroke="#eeeeee" stroke-width="5.5"/></svg>
<div class="t" style="left:619px;top:1327px;font-size:22px;color:#f6f6f6;text-align:center;width:106px;">Decay</div>
<div class="a" style="left:731px;top:1183px;width:106px;height:186px;background:#414141;border-radius:9px;"></div>
<div class="a" style="left:731px;top:1359px;width:106px;height:10px;background:#e9dc1c;border-radius:0 0 9px 9px;"></div>
<svg class="a" style="left:767.0px;top:1193.0px;" width="36.0" height="16.0" viewBox="0 0 36.0 16.0"><g transform="scale(1.0)"><circle cx="7" cy="8" r="6.8" fill="#38c8f4"/><rect x="8" y="6" width="18" height="4" fill="#38c8f4"/><path d="M24.5 0 L35 8 L24.5 16 Z" fill="#38c8f4"/></g></svg>
<svg class="a" style="left:735.0px;top:1223.0px;" width="98" height="98" viewBox="0 0 98 98"><path d="M19.7 78.3 A41.5 41.5 0 1 1 78.3 78.3" fill="none" stroke="#585858" stroke-width="5"/><circle cx="49.0" cy="49.0" r="35.0" fill="#2e2e2e"/><defs><linearGradient id="g784_1272" x1="0" y1="0" x2="0" y2="1"><stop offset="0" stop-color="#a9a9a9"/><stop offset="1" stop-color="#5c5c5c"/></linearGradient></defs><circle cx="49.0" cy="49.0" r="31.5" fill="url(#g784_1272)"/><line x1="43.3" y1="55.8" x2="29.4" y2="72.4" stroke="#eeeeee" stroke-width="5.5"/></svg>
<div class="t" style="left:731px;top:1327px;font-size:22px;color:#f6f6f6;text-align:center;width:106px;">Frq Shift</div>
<div class="a" style="left:843px;top:1183px;width:106px;height:186px;background:#414141;border-radius:9px;"></div>
<div class="a" style="left:843px;top:1359px;width:106px;height:10px;background:#4cc41c;border-radius:0 0 9px 9px;"></div>
<svg class="a" style="left:879.0px;top:1193.0px;" width="36.0" height="16.0" viewBox="0 0 36.0 16.0"><g transform="scale(1.0)"><circle cx="7" cy="8" r="6.8" fill="#38c8f4"/><rect x="8" y="6" width="18" height="4" fill="#38c8f4"/><path d="M24.5 0 L35 8 L24.5 16 Z" fill="#38c8f4"/></g></svg>
<svg class="a" style="left:847.0px;top:1223.0px;" width="98" height="98" viewBox="0 0 98 98"><path d="M19.7 78.3 A41.5 41.5 0 1 1 78.3 78.3" fill="none" stroke="#585858" stroke-width="5"/><circle cx="49.0" cy="49.0" r="35.0" fill="#2e2e2e"/><defs><linearGradient id="g896_1272" x1="0" y1="0" x2="0" y2="1"><stop offset="0" stop-color="#a9a9a9"/><stop offset="1" stop-color="#5c5c5c"/></linearGradient></defs><circle cx="49.0" cy="49.0" r="31.5" fill="url(#g896_1272)"/><line x1="43.3" y1="55.8" x2="29.4" y2="72.4" stroke="#eeeeee" stroke-width="5.5"/></svg>
<div class="t" style="left:843px;top:1327px;font-size:22px;color:#f6f6f6;text-align:center;width:106px;">Width</div>
<div class="a" style="left:507px;top:1375px;width:106px;height:186px;background:#414141;border-radius:9px;"></div>
<div class="a" style="left:507px;top:1551px;width:106px;height:10px;background:#46cc8a;border-radius:0 0 9px 9px;"></div>
<svg class="a" style="left:511.0px;top:1415.0px;" width="98" height="98" viewBox="0 0 98 98"><path d="M19.7 78.3 A41.5 41.5 0 1 1 78.3 78.3" fill="none" stroke="#585858" stroke-width="5"/><circle cx="49.0" cy="49.0" r="35.0" fill="#2e2e2e"/><defs><linearGradient id="g560_1464" x1="0" y1="0" x2="0" y2="1"><stop offset="0" stop-color="#a9a9a9"/><stop offset="1" stop-color="#5c5c5c"/></linearGradient></defs><circle cx="49.0" cy="49.0" r="31.5" fill="url(#g560_1464)"/><line x1="43.3" y1="55.8" x2="29.4" y2="72.4" stroke="#eeeeee" stroke-width="5.5"/></svg>
<div class="t" style="left:507px;top:1519px;font-size:22px;color:#f6f6f6;text-align:center;width:106px;">Movement</div>
<div class="a" style="left:619px;top:1375px;width:106px;height:186px;background:#414141;border-radius:9px;"></div>
<div class="a" style="left:619px;top:1551px;width:106px;height:10px;background:#3c9ee8;border-radius:0 0 9px 9px;"></div>
<svg class="a" style="left:623.0px;top:1415.0px;" width="98" height="98" viewBox="0 0 98 98"><path d="M19.7 78.3 A41.5 41.5 0 1 1 78.3 78.3" fill="none" stroke="#585858" stroke-width="5"/><circle cx="49.0" cy="49.0" r="35.0" fill="#2e2e2e"/><defs><linearGradient id="g672_1464" x1="0" y1="0" x2="0" y2="1"><stop offset="0" stop-color="#a9a9a9"/><stop offset="1" stop-color="#5c5c5c"/></linearGradient></defs><circle cx="49.0" cy="49.0" r="31.5" fill="url(#g672_1464)"/><line x1="43.3" y1="55.8" x2="29.4" y2="72.4" stroke="#eeeeee" stroke-width="5.5"/></svg>
<div class="t" style="left:619px;top:1519px;font-size:22px;color:#f6f6f6;text-align:center;width:106px;">Chorus</div>
<div class="a" style="left:731px;top:1375px;width:106px;height:186px;background:#414141;border-radius:9px;"></div>
<div class="a" style="left:731px;top:1551px;width:106px;height:10px;background:#b65ee8;border-radius:0 0 9px 9px;"></div>
<svg class="a" style="left:735.0px;top:1415.0px;" width="98" height="98" viewBox="0 0 98 98"><path d="M19.7 78.3 A41.5 41.5 0 1 1 78.3 78.3" fill="none" stroke="#585858" stroke-width="5"/><circle cx="49.0" cy="49.0" r="35.0" fill="#2e2e2e"/><defs><linearGradient id="g784_1464" x1="0" y1="0" x2="0" y2="1"><stop offset="0" stop-color="#a9a9a9"/><stop offset="1" stop-color="#5c5c5c"/></linearGradient></defs><circle cx="49.0" cy="49.0" r="31.5" fill="url(#g784_1464)"/><line x1="43.3" y1="55.8" x2="29.4" y2="72.4" stroke="#eeeeee" stroke-width="5.5"/></svg>
<div class="t" style="left:731px;top:1519px;font-size:22px;color:#f6f6f6;text-align:center;width:106px;">Room</div>
<div class="a" style="left:843px;top:1375px;width:106px;height:186px;background:#414141;border-radius:9px;"></div>
<div class="a" style="left:843px;top:1551px;width:106px;height:10px;background:#ec4aa8;border-radius:0 0 9px 9px;"></div>
<svg class="a" style="left:847.0px;top:1415.0px;" width="98" height="98" viewBox="0 0 98 98"><path d="M19.7 78.3 A41.5 41.5 0 1 1 78.3 78.3" fill="none" stroke="#585858" stroke-width="5"/><path d="M19.7 78.3 A41.5 41.5 0 1 1 88.0 34.8" fill="none" stroke="#f08a24" stroke-width="5"/><circle cx="49.0" cy="49.0" r="35.0" fill="#2e2e2e"/><defs><linearGradient id="g896_1464" x1="0" y1="0" x2="0" y2="1"><stop offset="0" stop-color="#a9a9a9"/><stop offset="1" stop-color="#5c5c5c"/></linearGradient></defs><circle cx="49.0" cy="49.0" r="31.5" fill="url(#g896_1464)"/><line x1="57.3" y1="46.0" x2="77.7" y2="38.5" stroke="#eeeeee" stroke-width="5.5"/></svg>
<div class="t" style="left:843px;top:1519px;font-size:22px;color:#f6f6f6;text-align:center;width:106px;">Output</div>
<div class="a" style="left:955px;top:1129px;width:8px;height:437px;background:#1e1e1e;"></div>
<div class="a" style="left:963px;top:1129px;width:1102px;height:437px;background:#525252;border-radius:0 12px 12px 0;"></div>
<div class="a" style="left:969px;top:1135px;width:53px;height:425px;background:#444;border-radius:6px;"></div>
<svg class="a" style="left:982px;top:1145px;" width="26" height="26" viewBox="0 0 26 26"><circle cx="13" cy="13" r="11" fill="none" stroke="#a8a8a8" stroke-width="3"/><circle cx="8" cy="11" r="1.5" fill="#a8a8a8"/><circle cx="10" cy="8" r="1.5" fill="#a8a8a8"/><circle cx="13" cy="7" r="1.5" fill="#a8a8a8"/><circle cx="16" cy="8" r="1.5" fill="#a8a8a8"/><circle cx="18" cy="11" r="1.5" fill="#a8a8a8"/></svg>
<svg class="a" style="left:977px;top:1171px;" width="40" height="380" viewBox="0 0 40 380"><rect x="0" y="10" width="8" height="8" fill="#262626"/><rect x="10" y="10" width="8" height="8" fill="#262626"/><rect x="20" y="10" width="8" height="8" fill="#262626"/><rect x="30" y="10" width="8" height="8" fill="#262626"/><rect x="0" y="20" width="8" height="8" fill="#262626"/><rect x="10" y="20" width="8" height="8" fill="#262626"/><rect x="20" y="20" width="8" height="8" fill="#262626"/><rect x="30" y="20" width="8" height="8" fill="#262626"/><rect x="0" y="30" width="8" height="8" fill="#262626"/><rect x="10" y="30" width="8" height="8" fill="#262626"/><rect x="20" y="30" width="8" height="8" fill="#262626"/><rect x="30" y="30" width="8" height="8" fill="#262626"/><rect x="0" y="45" width="8" height="8" fill="#262626"/><rect x="10" y="45" width="8" height="8" fill="#262626"/><rect x="20" y="45" width="8" height="8" fill="#262626"/><rect x="30" y="45" width="8" height="8" fill="#262626"/><rect x="0" y="55" width="8" height="8" fill="#262626"/><rect x="10" y="55" width="8" height="8" fill="#262626"/><rect x="20" y="55" width="8" height="8" fill="#262626"/><rect x="30" y="55" width="8" height="8" fill="#262626"/><rect x="0" y="65" width="8" height="8" fill="#262626"/><rect x="10" y="65" width="8" height="8" fill="#262626"/><rect x="20" y="65" width="8" height="8" fill="#262626"/><rect x="30" y="65" width="8" height="8" fill="#262626"/><rect x="0" y="75" width="8" height="8" fill="#262626"/><rect x="10" y="75" width="8" height="8" fill="#262626"/><rect x="20" y="75" width="8" height="8" fill="#262626"/><rect x="30" y="75" width="8" height="8" fill="#262626"/><rect x="0" y="91" width="8" height="8" fill="#262626"/><rect x="10" y="91" width="8" height="8" fill="#262626"/><rect x="20" y="91" width="8" height="8" fill="#262626"/><rect x="30" y="91" width="8" height="8" fill="#262626"/><rect x="0" y="101" width="8" height="8" fill="#262626"/><rect x="10" y="101" width="8" height="8" fill="#262626"/><rect x="20" y="101" width="8" height="8" fill="#262626"/><rect x="30" y="101" width="8" height="8" fill="#262626"/><rect x="0" y="111" width="8" height="8" fill="#262626"/><rect x="10" y="111" width="8" height="8" fill="#262626"/><rect x="20" y="111" width="8" height="8" fill="#262626"/><rect x="30" y="111" width="8" height="8" fill="#262626"/><rect x="0" y="121" width="8" height="8" fill="#262626"/><rect x="10" y="121" width="8" height="8" fill="#262626"/><rect x="20" y="121" width="8" height="8" fill="#262626"/><rect x="30" y="121" width="8" height="8" fill="#262626"/><rect x="0" y="137" width="8" height="8" fill="#262626"/><rect x="10" y="137" width="8" height="8" fill="#262626"/><rect x="20" y="137" width="8" height="8" fill="#262626"/><rect x="30" y="137" width="8" height="8" fill="#262626"/><rect x="0" y="147" width="8" height="8" fill="#262626"/><rect x="10" y="147" width="8" height="8" fill="#262626"/><rect x="20" y="147" width="8" height="8" fill="#262626"/><rect x="30" y="147" width="8" height="8" fill="#262626"/><rect x="0" y="157" width="8" height="8" fill="#262626"/><rect x="10" y="157" width="8" height="8" fill="#262626"/><rect x="20" y="157" width="8" height="8" fill="#262626"/><rect x="30" y="157" width="8" height="8" fill="#262626"/><rect x="0" y="167" width="8" height="8" fill="#262626"/><rect x="10" y="167" width="8" height="8" fill="#262626"/><rect x="20" y="167" width="8" height="8" fill="#262626"/><rect x="30" y="167" width="8" height="8" fill="#262626"/><rect x="0" y="183" width="8" height="8" fill="#262626"/><rect x="10" y="183" width="8" height="8" fill="#262626"/><rect x="20" y="183" width="8" height="8" fill="#262626"/><rect x="30" y="183" width="8" height="8" fill="#262626"/><rect x="0" y="193" width="8" height="8" fill="#262626"/><rect x="10" y="193" width="8" height="8" fill="#262626"/><rect x="20" y="193" width="8" height="8" fill="#262626"/><rect x="30" y="193" width="8" height="8" fill="#262626"/><rect x="0" y="203" width="8" height="8" fill="#a5a5a5"/><rect x="10" y="203" width="8" height="8" fill="#262626"/><rect x="20" y="203" width="8" height="8" fill="#262626"/><rect x="30" y="203" width="8" height="8" fill="#262626"/><rect x="0" y="213" width="8" height="8" fill="#a5a5a5"/><rect x="10" y="213" width="8" height="8" fill="#a5a5a5"/><rect x="20" y="213" width="8" height="8" fill="#a5a5a5"/><rect x="30" y="213" width="8" height="8" fill="#a5a5a5"/><rect x="0" y="274" width="8" height="8" fill="#262626"/><rect x="10" y="274" width="8" height="8" fill="#262626"/><rect x="20" y="274" width="8" height="8" fill="#262626"/><rect x="30" y="274" width="8" height="8" fill="#262626"/><rect x="0" y="284" width="8" height="8" fill="#262626"/><rect x="10" y="284" width="8" height="8" fill="#262626"/><rect x="20" y="284" width="8" height="8" fill="#262626"/><rect x="30" y="284" width="8" height="8" fill="#262626"/><rect x="0" y="294" width="8" height="8" fill="#262626"/><rect x="10" y="294" width="8" height="8" fill="#262626"/><rect x="20" y="294" width="8" height="8" fill="#262626"/><rect x="30" y="294" width="8" height="8" fill="#262626"/><rect x="0" y="304" width="8" height="8" fill="#262626"/><rect x="10" y="304" width="8" height="8" fill="#262626"/><rect x="20" y="304" width="8" height="8" fill="#262626"/><rect x="30" y="304" width="8" height="8" fill="#262626"/><rect x="0" y="320" width="8" height="8" fill="#262626"/><rect x="10" y="320" width="8" height="8" fill="#262626"/><rect x="20" y="320" width="8" height="8" fill="#262626"/><rect x="30" y="320" width="8" height="8" fill="#262626"/><rect x="0" y="330" width="8" height="8" fill="#262626"/><rect x="10" y="330" width="8" height="8" fill="#262626"/><rect x="20" y="330" width="8" height="8" fill="#262626"/><rect x="30" y="330" width="8" height="8" fill="#262626"/><rect x="0" y="340" width="8" height="8" fill="#262626"/><rect x="10" y="340" width="8" height="8" fill="#262626"/><rect x="20" y="340" width="8" height="8" fill="#262626"/><rect x="30" y="340" width="8" height="8" fill="#262626"/><rect x="0" y="350" width="8" height="8" fill="#262626"/><rect x="10" y="350" width="8" height="8" fill="#262626"/><rect x="20" y="350" width="8" height="8" fill="#262626"/><rect x="30" y="350" width="8" height="8" fill="#262626"/><rect x="0" y="366" width="8" height="8" fill="#262626"/><rect x="10" y="366" width="8" height="8" fill="#262626"/><rect x="20" y="366" width="8" height="8" fill="#262626"/><rect x="30" y="366" width="8" height="8" fill="#262626"/></svg>
<div class="a" style="left:976px;top:1400px;width:39px;height:38px;background:#e8e8e8;"></div>
<svg class="a" style="left:978px;top:1402px;" width="35" height="34" viewBox="0 0 35 34"><rect x="1.0" y="1.0" width="7" height="7" fill="#a8a8a8"/><rect x="9.6" y="1.0" width="7" height="7" fill="#a8a8a8"/><rect x="18.2" y="1.0" width="7" height="7" fill="#a8a8a8"/><rect x="26.8" y="1.0" width="7" height="7" fill="#a8a8a8"/><rect x="1.0" y="9.4" width="7" height="7" fill="#a8a8a8"/><rect x="9.6" y="9.4" width="7" height="7" fill="#a8a8a8"/><rect x="18.2" y="9.4" width="7" height="7" fill="#a8a8a8"/><rect x="26.8" y="9.4" width="7" height="7" fill="#a8a8a8"/><rect x="1.0" y="17.8" width="7" height="7" fill="#a8a8a8"/><rect x="9.6" y="17.8" width="7" height="7" fill="#a8a8a8"/><rect x="18.2" y="17.8" width="7" height="7" fill="#a8a8a8"/><rect x="26.8" y="17.8" width="7" height="7" fill="#a8a8a8"/><rect x="1.0" y="26.2" width="7" height="7" fill="#a8a8a8"/><rect x="9.6" y="26.2" width="7" height="7" fill="#a8a8a8"/><rect x="18.2" y="26.2" width="7" height="7" fill="#a8a8a8"/><rect x="26.8" y="26.2" width="7" height="7" fill="#a8a8a8"/></svg>
<div class="a" style="left:1029px;top:1135px;width:128px;height:101px;background:#353535;border-radius:9px;"></div>
<div class="t" style="left:1039px;top:1143px;font-size:21px;color:#f2f2f2;text-align:left;white-space:nowrap;">Snarl-Sa...</div>
<svg class="a" style="left:1037px;top:1168px;" width="113" height="8" viewBox="0 0 113 8"><rect x="0" y="2" width="113" height="4" fill="#4a7a96"/><rect x="0" y="2" width="3" height="6" fill="#4a7a96"/><rect x="110" y="2" width="3" height="6" fill="#4a7a96"/></svg>
<div class="a" style="left:1045px;top:1178px;width:18px;height:16px;background:#3f3f3f;"></div>
<svg class="a" style="left:1046px;top:1205px;" width="16" height="16" viewBox="0 0 16 16"><path d="M0 0 L16 8 L0 16 Z" fill="#f6f6f6"/></svg>
<div class="t" style="left:1085px;top:1204px;font-size:19px;color:#f2f2f2;text-align:left;white-space:nowrap;">S</div>
<div class="t" style="left:1124px;top:1204px;font-size:19px;color:#f2f2f2;text-align:left;white-space:nowrap;">M</div>
<div class="a" style="left:1164px;top:1135px;width:128px;height:101px;background:#353535;border-radius:9px;"></div>
<div class="t" style="left:1174px;top:1143px;font-size:21px;color:#f2f2f2;text-align:left;white-space:nowrap;">Snarl-Sa...</div>
<svg class="a" style="left:1172px;top:1168px;" width="113" height="8" viewBox="0 0 113 8"><rect x="0" y="2" width="113" height="4" fill="#4a7a96"/><rect x="0" y="2" width="3" height="6" fill="#4a7a96"/><rect x="110" y="2" width="3" height="6" fill="#4a7a96"/></svg>
<div class="a" style="left:1180px;top:1178px;width:18px;height:16px;background:#3f3f3f;"></div>
<svg class="a" style="left:1181px;top:1205px;" width="16" height="16" viewBox="0 0 16 16"><path d="M0 0 L16 8 L0 16 Z" fill="#f6f6f6"/></svg>
<div class="t" style="left:1220px;top:1204px;font-size:19px;color:#f2f2f2;text-align:left;white-space:nowrap;">S</div>
<div class="t" style="left:1259px;top:1204px;font-size:19px;color:#f2f2f2;text-align:left;white-space:nowrap;">M</div>
<div class="a" style="left:1299px;top:1135px;width:128px;height:101px;background:#353535;border-radius:9px;"></div>
<div class="t" style="left:1309px;top:1143px;font-size:21px;color:#f2f2f2;text-align:left;white-space:nowrap;">Snarl-Sa...</div>
<svg class="a" style="left:1307px;top:1168px;" width="113" height="8" viewBox="0 0 113 8"><rect x="0" y="2" width="113" height="4" fill="#4a7a96"/><rect x="0" y="2" width="3" height="6" fill="#4a7a96"/><rect x="110" y="2" width="3" height="6" fill="#4a7a96"/></svg>
<div class="a" style="left:1315px;top:1178px;width:18px;height:16px;background:#3f3f3f;"></div>
<svg class="a" style="left:1316px;top:1205px;" width="16" height="16" viewBox="0 0 16 16"><path d="M0 0 L16 8 L0 16 Z" fill="#f6f6f6"/></svg>
<div class="t" style="left:1355px;top:1204px;font-size:19px;color:#f2f2f2;text-align:left;white-space:nowrap;">S</div>
<div class="t" style="left:1394px;top:1204px;font-size:19px;color:#f2f2f2;text-align:left;white-space:nowrap;">M</div>
<div class="a" style="left:1434px;top:1135px;width:128px;height:101px;background:#353535;border-radius:9px;"></div>
<div class="t" style="left:1444px;top:1143px;font-size:21px;color:#f2f2f2;text-align:left;white-space:nowrap;">Snarl-Sa...</div>
<svg class="a" style="left:1442px;top:1168px;" width="113" height="8" viewBox="0 0 113 8"><rect x="0" y="2" width="113" height="4" fill="#4a7a96"/><rect x="0" y="2" width="3" height="6" fill="#4a7a96"/><rect x="110" y="2" width="3" height="6" fill="#4a7a96"/></svg>
<div class="a" style="left:1450px;top:1178px;width:18px;height:16px;background:#3f3f3f;"></div>
<svg class="a" style="left:1451px;top:1205px;" width="16" height="16" viewBox="0 0 16 16"><path d="M0 0 L16 8 L0 16 Z" fill="#f6f6f6"/></svg>
<div class="t" style="left:1490px;top:1204px;font-size:19px;color:#f2f2f2;text-align:left;white-space:nowrap;">S</div>
<div class="t" style="left:1529px;top:1204px;font-size:19px;color:#f2f2f2;text-align:left;white-space:nowrap;">M</div>
<div class="a" style="left:1029px;top:1243px;width:128px;height:101px;background:#353535;border-radius:9px;"></div>
<div class="t" style="left:1039px;top:1251px;font-size:21px;color:#f2f2f2;text-align:left;white-space:nowrap;">Snarl-Sa...</div>
<svg class="a" style="left:1037px;top:1276px;" width="113" height="8" viewBox="0 0 113 8"><rect x="0" y="2" width="113" height="4" fill="#4a7a96"/><rect x="0" y="2" width="3" height="6" fill="#4a7a96"/><rect x="110" y="2" width="3" height="6" fill="#4a7a96"/></svg>
<div class="a" style="left:1045px;top:1286px;width:18px;height:16px;background:#3f3f3f;"></div>
<svg class="a" style="left:1046px;top:1313px;" width="16" height="16" viewBox="0 0 16 16"><path d="M0 0 L16 8 L0 16 Z" fill="#f6f6f6"/></svg>
<div class="t" style="left:1085px;top:1312px;font-size:19px;color:#f2f2f2;text-align:left;white-space:nowrap;">S</div>
<div class="t" style="left:1124px;top:1312px;font-size:19px;color:#f2f2f2;text-align:left;white-space:nowrap;">M</div>
<div class="a" style="left:1164px;top:1243px;width:128px;height:101px;background:#353535;border-radius:9px;"></div>
<div class="t" style="left:1174px;top:1251px;font-size:21px;color:#f2f2f2;text-align:left;white-space:nowrap;">Snarl-Sa...</div>
<svg class="a" style="left:1172px;top:1276px;" width="113" height="8" viewBox="0 0 113 8"><rect x="0" y="2" width="113" height="4" fill="#4a7a96"/><rect x="0" y="2" width="3" height="6" fill="#4a7a96"/><rect x="110" y="2" width="3" height="6" fill="#4a7a96"/></svg>
<div class="a" style="left:1180px;top:1286px;width:18px;height:16px;background:#3f3f3f;"></div>
<svg class="a" style="left:1181px;top:1313px;" width="16" height="16" viewBox="0 0 16 16"><path d="M0 0 L16 8 L0 16 Z" fill="#f6f6f6"/></svg>
<div class="t" style="left:1220px;top:1312px;font-size:19px;color:#f2f2f2;text-align:left;white-space:nowrap;">S</div>
<div class="t" style="left:1259px;top:1312px;font-size:19px;color:#f2f2f2;text-align:left;white-space:nowrap;">M</div>
<div class="a" style="left:1299px;top:1243px;width:128px;height:101px;background:#353535;border-radius:9px;"></div>
<div class="t" style="left:1309px;top:1251px;font-size:21px;color:#f2f2f2;text-align:left;white-space:nowrap;">Snarl-Sa...</div>
<svg class="a" style="left:1307px;top:1276px;" width="113" height="8" viewBox="0 0 113 8"><rect x="0" y="2" width="113" height="4" fill="#4a7a96"/><rect x="0" y="2" width="3" height="6" fill="#4a7a96"/><rect x="110" y="2" width="3" height="6" fill="#4a7a96"/></svg>
<div class="a" style="left:1315px;top:1286px;width:18px;height:16px;background:#3f3f3f;"></div>
<svg class="a" style="left:1316px;top:1313px;" width="16" height="16" viewBox="0 0 16 16"><path d="M0 0 L16 8 L0 16 Z" fill="#f6f6f6"/></svg>
<div class="t" style="left:1355px;top:1312px;font-size:19px;color:#f2f2f2;text-align:left;white-space:nowrap;">S</div>
<div class="t" style="left:1394px;top:1312px;font-size:19px;color:#f2f2f2;text-align:left;white-space:nowrap;">M</div>
<div class="a" style="left:1434px;top:1243px;width:128px;height:101px;background:#353535;border-radius:9px;"></div>
<div class="t" style="left:1444px;top:1251px;font-size:21px;color:#f2f2f2;text-align:left;white-space:nowrap;">Snarl-Sa...</div>
<svg class="a" style="left:1442px;top:1276px;" width="113" height="8" viewBox="0 0 113 8"><rect x="0" y="2" width="113" height="4" fill="#4a7a96"/><rect x="0" y="2" width="3" height="6" fill="#4a7a96"/><rect x="110" y="2" width="3" height="6" fill="#4a7a96"/></svg>
<div class="a" style="left:1450px;top:1286px;width:18px;height:16px;background:#3f3f3f;"></div>
<svg class="a" style="left:1451px;top:1313px;" width="16" height="16" viewBox="0 0 16 16"><path d="M0 0 L16 8 L0 16 Z" fill="#f6f6f6"/></svg>
<div class="t" style="left:1490px;top:1312px;font-size:19px;color:#f2f2f2;text-align:left;white-space:nowrap;">S</div>
<div class="t" style="left:1529px;top:1312px;font-size:19px;color:#f2f2f2;text-align:left;white-space:nowrap;">M</div>
<div class="a" style="left:1029px;top:1351px;width:128px;height:101px;background:#353535;border-radius:9px;"></div>
<div class="t" style="left:1039px;top:1359px;font-size:21px;color:#f2f2f2;text-align:left;white-space:nowrap;">Snarl-Sa...</div>
<svg class="a" style="left:1037px;top:1384px;" width="113" height="8" viewBox="0 0 113 8"><rect x="0" y="2" width="113" height="4" fill="#4a7a96"/><rect x="0" y="2" width="3" height="6" fill="#4a7a96"/><rect x="110" y="2" width="3" height="6" fill="#4a7a96"/></svg>
<div class="a" style="left:1045px;top:1394px;width:18px;height:16px;background:#3f3f3f;"></div>
<svg class="a" style="left:1046px;top:1421px;" width="16" height="16" viewBox="0 0 16 16"><path d="M0 0 L16 8 L0 16 Z" fill="#f6f6f6"/></svg>
<div class="t" style="left:1085px;top:1420px;font-size:19px;color:#f2f2f2;text-align:left;white-space:nowrap;">S</div>
<div class="t" style="left:1124px;top:1420px;font-size:19px;color:#f2f2f2;text-align:left;white-space:nowrap;">M</div>
<div class="a" style="left:1164px;top:1351px;width:128px;height:101px;background:#353535;border-radius:9px;"></div>
<div class="t" style="left:1174px;top:1359px;font-size:21px;color:#f2f2f2;text-align:left;white-space:nowrap;">Snarl-Sa...</div>
<svg class="a" style="left:1172px;top:1384px;" width="113" height="8" viewBox="0 0 113 8"><rect x="0" y="2" width="113" height="4" fill="#4a7a96"/><rect x="0" y="2" width="3" height="6" fill="#4a7a96"/><rect x="110" y="2" width="3" height="6" fill="#4a7a96"/></svg>
<div class="a" style="left:1180px;top:1394px;width:18px;height:16px;background:#3f3f3f;"></div>
<svg class="a" style="left:1181px;top:1421px;" width="16" height="16" viewBox="0 0 16 16"><path d="M0 0 L16 8 L0 16 Z" fill="#f6f6f6"/></svg>
<div class="t" style="left:1220px;top:1420px;font-size:19px;color:#f2f2f2;text-align:left;white-space:nowrap;">S</div>
<div class="t" style="left:1259px;top:1420px;font-size:19px;color:#f2f2f2;text-align:left;white-space:nowrap;">M</div>
<div class="a" style="left:1299px;top:1351px;width:128px;height:101px;background:#353535;border-radius:9px;"></div>
<div class="t" style="left:1309px;top:1359px;font-size:21px;color:#f2f2f2;text-align:left;white-space:nowrap;">Snarl-Sa...</div>
<svg class="a" style="left:1307px;top:1384px;" width="113" height="8" viewBox="0 0 113 8"><rect x="0" y="2" width="113" height="4" fill="#4a7a96"/><rect x="0" y="2" width="3" height="6" fill="#4a7a96"/><rect x="110" y="2" width="3" height="6" fill="#4a7a96"/></svg>
<div class="a" style="left:1315px;top:1394px;width:18px;height:16px;background:#3f3f3f;"></div>
<svg class="a" style="left:1316px;top:1421px;" width="16" height="16" viewBox="0 0 16 16"><path d="M0 0 L16 8 L0 16 Z" fill="#f6f6f6"/></svg>
<div class="t" style="left:1355px;top:1420px;font-size:19px;color:#f2f2f2;text-align:left;white-space:nowrap;">S</div>
<div class="t" style="left:1394px;top:1420px;font-size:19px;color:#f2f2f2;text-align:left;white-space:nowrap;">M</div>
<div class="a" style="left:1434px;top:1351px;width:128px;height:101px;background:#353535;border-radius:9px;"></div>
<div class="t" style="left:1444px;top:1359px;font-size:21px;color:#f2f2f2;text-align:left;white-space:nowrap;">Snarl-Sa...</div>
<svg class="a" style="left:1442px;top:1384px;" width="113" height="8" viewBox="0 0 113 8"><rect x="0" y="2" width="113" height="4" fill="#4a7a96"/><rect x="0" y="2" width="3" height="6" fill="#4a7a96"/><rect x="110" y="2" width="3" height="6" fill="#4a7a96"/></svg>
<div class="a" style="left:1450px;top:1394px;width:18px;height:16px;background:#3f3f3f;"></div>
<svg class="a" style="left:1451px;top:1421px;" width="16" height="16" viewBox="0 0 16 16"><path d="M0 0 L16 8 L0 16 Z" fill="#f6f6f6"/></svg>
<div class="t" style="left:1490px;top:1420px;font-size:19px;color:#f2f2f2;text-align:left;white-space:nowrap;">S</div>
<div class="t" style="left:1529px;top:1420px;font-size:19px;color:#f2f2f2;text-align:left;white-space:nowrap;">M</div>
<div class="a" style="left:1029px;top:1459px;width:128px;height:101px;background:#353535;border-radius:9px;"></div>
<div class="t" style="left:1039px;top:1467px;font-size:21px;color:#f2f2f2;text-align:left;white-space:nowrap;">Snarl-Sa...</div>
<svg class="a" style="left:1037px;top:1492px;" width="113" height="8" viewBox="0 0 113 8"><rect x="0" y="2" width="113" height="4" fill="#4a7a96"/><rect x="0" y="2" width="3" height="6" fill="#4a7a96"/><rect x="110" y="2" width="3" height="6" fill="#4a7a96"/></svg>
<div class="a" style="left:1045px;top:1502px;width:18px;height:16px;background:#3f3f3f;"></div>
<svg class="a" style="left:1046px;top:1529px;" width="16" height="16" viewBox="0 0 16 16"><path d="M0 0 L16 8 L0 16 Z" fill="#f6f6f6"/></svg>
<div class="t" style="left:1085px;top:1528px;font-size:19px;color:#f2f2f2;text-align:left;white-space:nowrap;">S</div>
<div class="t" style="left:1124px;top:1528px;font-size:19px;color:#f2f2f2;text-align:left;white-space:nowrap;">M</div>
<div class="a" style="left:1164px;top:1459px;width:128px;height:101px;background:#353535;border-radius:9px;"></div>
<div class="t" style="left:1174px;top:1467px;font-size:21px;color:#f2f2f2;text-align:left;white-space:nowrap;">Snarl-Sa...</div>
<svg class="a" style="left:1172px;top:1492px;" width="113" height="8" viewBox="0 0 113 8"><rect x="0" y="2" width="113" height="4" fill="#4a7a96"/><rect x="0" y="2" width="3" height="6" fill="#4a7a96"/><rect x="110" y="2" width="3" height="6" fill="#4a7a96"/></svg>
<div class="a" style="left:1180px;top:1502px;width:18px;height:16px;background:#3f3f3f;"></div>
<svg class="a" style="left:1181px;top:1529px;" width="16" height="16" viewBox="0 0 16 16"><path d="M0 0 L16 8 L0 16 Z" fill="#f6f6f6"/></svg>
<div class="t" style="left:1220px;top:1528px;font-size:19px;color:#f2f2f2;text-align:left;white-space:nowrap;">S</div>
<div class="t" style="left:1259px;top:1528px;font-size:19px;color:#f2f2f2;text-align:left;white-space:nowrap;">M</div>
<div class="a" style="left:1299px;top:1459px;width:128px;height:101px;background:#353535;border-radius:9px;"></div>
<div class="t" style="left:1309px;top:1467px;font-size:21px;color:#f2f2f2;text-align:left;white-space:nowrap;">Snarl-Sa...</div>
<svg class="a" style="left:1307px;top:1492px;" width="113" height="8" viewBox="0 0 113 8"><rect x="0" y="2" width="113" height="4" fill="#4a7a96"/><rect x="0" y="2" width="3" height="6" fill="#4a7a96"/><rect x="110" y="2" width="3" height="6" fill="#4a7a96"/></svg>
<div class="a" style="left:1315px;top:1502px;width:18px;height:16px;background:#3f3f3f;"></div>
<svg class="a" style="left:1316px;top:1529px;" width="16" height="16" viewBox="0 0 16 16"><path d="M0 0 L16 8 L0 16 Z" fill="#f6f6f6"/></svg>
<div class="t" style="left:1355px;top:1528px;font-size:19px;color:#f2f2f2;text-align:left;white-space:nowrap;">S</div>
<div class="t" style="left:1394px;top:1528px;font-size:19px;color:#f2f2f2;text-align:left;white-space:nowrap;">M</div>
<div class="a" style="left:1434px;top:1459px;width:128px;height:101px;background:#353535;border-radius:9px;"></div>
<div class="t" style="left:1444px;top:1467px;font-size:21px;color:#f2f2f2;text-align:left;white-space:nowrap;">Snarl-Sa...</div>
<svg class="a" style="left:1442px;top:1492px;" width="113" height="8" viewBox="0 0 113 8"><rect x="0" y="2" width="113" height="4" fill="#4a7a96"/><rect x="0" y="2" width="3" height="6" fill="#4a7a96"/><rect x="110" y="2" width="3" height="6" fill="#4a7a96"/></svg>
<div class="a" style="left:1450px;top:1502px;width:18px;height:16px;background:#3f3f3f;"></div>
<svg class="a" style="left:1451px;top:1529px;" width="16" height="16" viewBox="0 0 16 16"><path d="M0 0 L16 8 L0 16 Z" fill="#f6f6f6"/></svg>
<div class="t" style="left:1490px;top:1528px;font-size:19px;color:#f2f2f2;text-align:left;white-space:nowrap;">S</div>
<div class="t" style="left:1529px;top:1528px;font-size:19px;color:#f2f2f2;text-align:left;white-space:nowrap;">M</div>
<div class="a" style="left:1569px;top:1135px;width:82px;height:425px;background:#454545;border-radius:4px;"></div>
<svg class="a" style="left:1594px;top:1148px;" width="32" height="32" viewBox="0 0 32 32"><defs><linearGradient id="sk" x1="0" y1="0" x2="0" y2="1"><stop offset="0" stop-color="#6a6a6a"/><stop offset="1" stop-color="#3e3e3e"/></linearGradient></defs><circle cx="16" cy="16" r="16" fill="url(#sk)"/><line x1="12" y1="20" x2="7" y2="25" stroke="#777" stroke-width="3"/></svg>
<div class="a" style="left:1577px;top:1207px;width:65px;height:248px;background:#3d3d3d;border-radius:4px;"></div>
<div class="a" style="left:1579px;top:1451px;width:61px;height:2px;background:#555;"></div>
<div class="a" style="left:1578px;top:1465px;width:63px;height:37px;background:#444;border-radius:6px;"></div>
<div class="t" style="left:1578px;top:1474px;font-size:21px;color:#6e6e6e;text-align:center;width:63px;font-weight:bold;">S</div>
<div class="a" style="left:1578px;top:1513px;width:63px;height:37px;background:#444;border-radius:6px;"></div>
<div class="t" style="left:1578px;top:1522px;font-size:21px;color:#6e6e6e;text-align:center;width:63px;font-weight:bold;">M</div>
<div class="a" style="left:1657px;top:1135px;width:290px;height:425px;background:#0b0b0b;"></div>
<div class="a" style="left:1657px;top:1135px;width:290px;height:64px;background:#222;"></div>
<svg class="a" style="left:1697px;top:1159px;" width="22" height="22" viewBox="0 0 22 22"><path d="M1 2 H10 V18 M4 12 L10 19 L16 12" stroke="#f0f0f0" stroke-width="3" fill="none"/></svg>
<div class="t" style="left:1750px;top:1157px;font-size:23px;color:#f4f4f4;text-align:left;white-space:nowrap;">RETURNS</div>
<svg class="a" style="left:1792px;top:1212px;" width="20" height="20" viewBox="0 0 20 20"><path d="M10 1 V19 M1 10 H19" stroke="#a5a5a5" stroke-width="3.2"/></svg>
<div class="t" style="left:1657px;top:1370px;font-size:21px;color:#a8a8a8;text-align:center;width:290px;">Drop Devices Here</div>
<div class="a" style="left:1947px;top:1135px;width:111px;height:425px;background:#474747;border-radius:0 10px 10px 0;"></div>
<div class="a" style="left:1954px;top:1135px;width:103px;height:65px;background:#3a3a3a;border-radius:6px;"></div>
<div class="a" style="left:1959px;top:1141px;width:94px;height:4px;background:#5aa0b8;"></div>
<div class="a" style="left:1966px;top:1149px;width:18px;height:44px;background:#444;"></div>
<div class="a" style="left:1988px;top:1149px;width:18px;height:44px;background:#444;"></div>
<div class="a" style="left:2010px;top:1149px;width:18px;height:44px;background:#444;"></div>
<div class="a" style="left:2032px;top:1149px;width:18px;height:44px;background:#444;"></div>
<div class="t" style="left:1954px;top:1157px;font-size:23px;color:#f4f4f4;text-align:center;width:103px;">FX</div>
<svg class="a" style="left:1966.0px;top:1451.0px;" width="80" height="80" viewBox="0 0 80 80"><path d="M17.0 63.0 A32.5 32.5 0 1 1 63.0 63.0" fill="none" stroke="#585858" stroke-width="5"/><path d="M17.0 63.0 A32.5 32.5 0 1 1 70.5 28.9" fill="none" stroke="#f08a24" stroke-width="5"/><circle cx="40.0" cy="40.0" r="27.5" fill="#2e2e2e"/><defs><linearGradient id="g2006_1491" x1="0" y1="0" x2="0" y2="1"><stop offset="0" stop-color="#a9a9a9"/><stop offset="1" stop-color="#5c5c5c"/></linearGradient></defs><circle cx="40.0" cy="40.0" r="24" fill="url(#g2006_1491)"/><line x1="46.3" y1="37.7" x2="61.9" y2="32.0" stroke="#eeeeee" stroke-width="5.5"/></svg>
<div class="t" style="left:1947px;top:1530px;font-size:22px;color:#f2f2f2;text-align:center;width:111px;">Output</div>
<svg class="a" style="left:2076px;top:1338px;" width="20" height="20" viewBox="0 0 20 20"><path d="M10 1 V19 M1 10 H19" stroke="#a5a5a5" stroke-width="3.2"/></svg>
<div class="a" style="left:2107px;top:1129px;width:512px;height:437px;background:#525252;border-radius:12px 0 0 12px;"></div>
<div class="a" style="left:2107px;top:1129px;width:54px;height:437px;background:#424242;border-radius:12px 0 0 12px;"></div>
<svg class="a" style="left:2122px;top:1144px;" width="24" height="24" viewBox="0 0 24 24"><path d="M6.5 6 A9 9 0 1 0 17.5 6" fill="none" stroke="#f08a24" stroke-width="3.2"/><line x1="12" y1="1.5" x2="12" y2="11" stroke="#f08a24" stroke-width="3.2"/></svg>
<svg class="a" style="left:2123px;top:1189px;" width="24" height="20" viewBox="0 0 24 20"><rect x="0" y="0" width="9" height="4" fill="#a8a8a8"/><rect x="0" y="3" width="23" height="16" fill="#a8a8a8"/><rect x="0" y="3" width="10" height="2" fill="#454545"/></svg>
<div class="t" style="left:2133px;top:1348px;font-size:22.5px;color:#f0f0f0;transform:translate(-50%,-50%) rotate(-90deg);letter-spacing:-1.4px;">ORGAN</div>
<svg class="a" style="left:2121px;top:1499px;" width="25.5" height="17.0" viewBox="0 0 25.5 17.0"><circle cx="4.25" cy="4.25" r="3.2" fill="#b0b0b0"/><circle cx="4.25" cy="12.75" r="3.2" fill="#b0b0b0"/><circle cx="12.75" cy="4.25" r="3.2" fill="#b0b0b0"/><circle cx="12.75" cy="12.75" r="3.2" fill="#b0b0b0"/><circle cx="21.25" cy="4.25" r="3.2" fill="#b0b0b0"/><circle cx="21.25" cy="12.75" r="3.2" fill="#b0b0b0"/></svg>
<svg class="a" style="left:2122.4px;top:1537.6px;" width="28.8" height="12.8" viewBox="0 0 28.8 12.8"><g transform="scale(0.8)"><circle cx="7" cy="8" r="6.8" fill="#f08a24"/><rect x="8" y="6" width="18" height="4" fill="#f08a24"/><path d="M24.5 0 L35 8 L24.5 16 Z" fill="#f08a24"/></g></svg>
<div class="a" style="left:2167px;top:1135px;width:137px;height:136px;background:#333;border-radius:9px;"></div>
<div class="t" style="left:2262px;top:1149px;font-size:19px;color:#d8d8d8;text-align:left;white-space:nowrap;">MW</div>
<svg class="a" style="left:2175px;top:1145px;" width="124" height="86" viewBox="0 0 124 86"><path d="M0 43 Q30 -35 62 43 T124 43" fill="none" stroke="#f08a24" stroke-width="2.5"/><line x1="0" y1="43" x2="124" y2="43" stroke="#d0d0d0" stroke-width="3"/><circle cx="90" cy="43" r="5" fill="#f4f4f4"/></svg>
<svg class="a" style="left:2219.0px;top:1249.0px;" width="36.0" height="16.0" viewBox="0 0 36.0 16.0"><g transform="scale(1.0)"><circle cx="7" cy="8" r="6.8" fill="#38c8f4"/><rect x="8" y="6" width="18" height="4" fill="#38c8f4"/><path d="M24.5 0 L35 8 L24.5 16 Z" fill="#38c8f4"/></g></svg>
<div class="a" style="left:2167px;top:1280px;width:137px;height:136px;background:#333;border-radius:9px;"></div>
<div class="t" style="left:2167px;top:1290px;font-size:21px;color:#e2e2e2;text-align:center;width:137px;">Expressions</div>
<div class="t" style="left:2175px;top:1320px;font-size:18px;color:#3fe094;text-align:center;width:60px;font-weight:bold;">VEL</div>
<svg class="a" style="left:2188.35px;top:1344.4px;" width="34.199999999999996" height="15.2" viewBox="0 0 34.199999999999996 15.2"><g transform="scale(0.95)"><circle cx="7" cy="8" r="6.8" fill="#3fe094"/><rect x="8" y="6" width="18" height="4" fill="#3fe094"/><path d="M24.5 0 L35 8 L24.5 16 Z" fill="#3fe094"/></g></svg>
<div class="t" style="left:2238px;top:1320px;font-size:18px;color:#3fe094;text-align:center;width:60px;font-weight:bold;">TIMB</div>
<svg class="a" style="left:2251.35px;top:1344.4px;" width="34.199999999999996" height="15.2" viewBox="0 0 34.199999999999996 15.2"><g transform="scale(0.95)"><circle cx="7" cy="8" r="6.8" fill="#3fe094"/><rect x="8" y="6" width="18" height="4" fill="#3fe094"/><path d="M24.5 0 L35 8 L24.5 16 Z" fill="#3fe094"/></g></svg>
<div class="t" style="left:2175px;top:1368px;font-size:18px;color:#3fe094;text-align:center;width:60px;font-weight:bold;">REL</div>
<svg class="a" style="left:2188.35px;top:1392.4px;" width="34.199999999999996" height="15.2" viewBox="0 0 34.199999999999996 15.2"><g transform="scale(0.95)"><circle cx="7" cy="8" r="6.8" fill="#3fe094"/><rect x="8" y="6" width="18" height="4" fill="#3fe094"/><path d="M24.5 0 L35 8 L24.5 16 Z" fill="#3fe094"/></g></svg>
<div class="t" style="left:2238px;top:1368px;font-size:18px;color:#3fe094;text-align:center;width:60px;font-weight:bold;">PRES</div>
<svg class="a" style="left:2251.35px;top:1392.4px;" width="34.199999999999996" height="15.2" viewBox="0 0 34.199999999999996 15.2"><g transform="scale(0.95)"><circle cx="7" cy="8" r="6.8" fill="#3fe094"/><rect x="8" y="6" width="18" height="4" fill="#3fe094"/><path d="M24.5 0 L35 8 L24.5 16 Z" fill="#3fe094"/></g></svg>
<div class="a" style="left:2311px;top:1135px;width:308px;height:281px;background:#1c1c1c;border-radius:9px 0 0 9px;"></div>
<div class="t" style="left:2508px;top:1147px;font-size:23px;color:#f4f4f4;text-align:left;white-space:nowrap;">Rich</div>
<svg class="a" style="left:2570px;top:1153px;" width="16" height="10" viewBox="0 0 16 10"><path d="M0 0 L16 0 L8 10 Z" fill="#f4f4f4"/></svg>
<div class="a" style="left:2319px;top:1191px;width:42px;height:217px;background:#643d16;"></div>
<div class="a" style="left:2319px;top:1191px;width:42px;height:4px;background:#f08a24;"></div>
<div class="a" style="left:2367px;top:1208px;width:42px;height:200px;background:#643d16;"></div>
<div class="a" style="left:2367px;top:1208px;width:42px;height:4px;background:#f08a24;"></div>
<div class="a" style="left:2415px;top:1243px;width:42px;height:165px;background:#643d16;"></div>
<div class="a" style="left:2415px;top:1243px;width:42px;height:4px;background:#f08a24;"></div>
<div class="a" style="left:2463px;top:1401px;width:42px;height:7px;background:#643d16;"></div>
<div class="a" style="left:2463px;top:1401px;width:42px;height:4px;background:#f08a24;"></div>
<div class="a" style="left:2511px;top:1317px;width:42px;height:91px;background:#643d16;"></div>
<div class="a" style="left:2511px;top:1317px;width:42px;height:4px;background:#f08a24;"></div>
<div class="a" style="left:2559px;top:1385px;width:42px;height:23px;background:#643d16;"></div>
<div class="a" style="left:2559px;top:1385px;width:42px;height:4px;background:#f08a24;"></div>
<div class="a" style="left:2607px;top:1283px;width:8px;height:125px;background:#4a3015;"></div>
<div class="a" style="left:2167px;top:1423px;width:137px;height:137px;background:#414141;border-radius:9px;"></div>
<svg class="a" style="left:2226px;top:1481px;" width="20" height="20" viewBox="0 0 20 20"><path d="M10 1 V19 M1 10 H19" stroke="#a5a5a5" stroke-width="3.5"/></svg>
<div class="a" style="left:2311px;top:1423px;width:308px;height:137px;background:#414141;border-radius:9px 0 0 9px;"></div>
<svg class="a" style="left:2324.0px;top:1444.0px;" width="96" height="96" viewBox="0 0 96 96"><path d="M19.4 76.6 A40.5 40.5 0 1 1 76.6 76.6" fill="none" stroke="#585858" stroke-width="5"/><path d="M48.0 7.5 A40.5 40.5 0 0 1 86.5 60.5" fill="none" stroke="#f08a24" stroke-width="5"/><circle cx="48.0" cy="48.0" r="35.0" fill="#2e2e2e"/><defs><linearGradient id="g2372_1492" x1="0" y1="0" x2="0" y2="1"><stop offset="0" stop-color="#a9a9a9"/><stop offset="1" stop-color="#5c5c5c"/></linearGradient></defs><circle cx="48.0" cy="48.0" r="31.5" fill="url(#g2372_1492)"/><line x1="56.3" y1="51.0" x2="76.7" y2="58.5" stroke="#eeeeee" stroke-width="5.5"/></svg>
<div class="a" style="left:2404px;top:1488px;width:40px;height:5px;background:#555;"></div>
<svg class="a" style="left:2428.0px;top:1452.0px;" width="80" height="80" viewBox="0 0 80 80"><path d="M17.0 63.0 A32.5 32.5 0 1 1 63.0 63.0" fill="none" stroke="#585858" stroke-width="5"/><circle cx="40.0" cy="40.0" r="27.5" fill="#2e2e2e"/><defs><linearGradient id="g2468_1492" x1="0" y1="0" x2="0" y2="1"><stop offset="0" stop-color="#a9a9a9"/><stop offset="1" stop-color="#5c5c5c"/></linearGradient></defs><circle cx="40.0" cy="40.0" r="24" fill="url(#g2468_1492)"/><line x1="35.7" y1="45.1" x2="25.0" y2="57.8" stroke="#eeeeee" stroke-width="5.5"/></svg>
<div class="t" style="left:2320px;top:1530px;font-size:22px;color:#cfcfcf;text-align:center;width:105px;">Pitch</div>
<div class="t" style="left:2431px;top:1530px;font-size:22px;color:#c8c8c8;text-align:left;white-space:nowrap;letter-spacing:-0.3px;">Glide</div>
<div class="a" style="left:2485px;top:1531px;width:22px;height:22px;background:#a9a9a9;border-radius:4px;"></div>
<div class="t" style="left:2485px;top:1534px;font-size:16px;color:#3a3a3a;text-align:center;width:22px;font-weight:bold;">L</div>
<svg class="a" style="left:2538.0px;top:1444.0px;" width="96" height="96" viewBox="0 0 96 96"><path d="M19.4 76.6 A40.5 40.5 0 1 1 76.6 76.6" fill="none" stroke="#585858" stroke-width="5"/><path d="M19.4 76.6 A40.5 40.5 0 0 1 8.1 41.0" fill="none" stroke="#f08a24" stroke-width="5"/><circle cx="48.0" cy="48.0" r="35.0" fill="#2e2e2e"/><defs><linearGradient id="g2586_1492" x1="0" y1="0" x2="0" y2="1"><stop offset="0" stop-color="#a9a9a9"/><stop offset="1" stop-color="#5c5c5c"/></linearGradient></defs><circle cx="48.0" cy="48.0" r="31.5" fill="url(#g2586_1492)"/><line x1="39.5" y1="45.7" x2="18.5" y2="40.1" stroke="#eeeeee" stroke-width="5.5"/></svg>
<div class="t" style="left:2556px;top:1530px;font-size:22px;color:#cfcfcf;text-align:left;white-space:nowrap;">Attac</div>
<div class="a" style="left:2580px;top:1129px;width:35px;height:437px;background:linear-gradient(90deg,rgba(0,0,0,0),rgba(0,0,0,0.45));"></div>
<div class="a" style="left:2615px;top:1105px;width:4px;height:486px;background:#585858;"></div>
<div class="a" style="left:405px;top:1583px;width:1885px;height:8px;background:#636363;"></div>
<div class="a" style="left:2625px;top:105px;width:444px;height:1489px;background:#404040;border:4px solid #555;border-radius:7px;"></div>
<div class="t" style="left:2644px;top:121px;font-size:22px;color:#f4f4f4;text-align:left;white-space:nowrap;">Browser - Clips</div>
<svg class="a" style="left:2643px;top:158px;" width="30" height="30" viewBox="0 0 30 30"><rect x="2" y="2" width="26" height="26" rx="5" fill="none" stroke="#f6f6f6" stroke-width="4"/></svg>
<svg class="a" style="left:2705px;top:157px;" width="32" height="32" viewBox="0 0 32 32"><circle cx="16" cy="16" r="13.5" fill="none" stroke="#f2f2f2" stroke-width="3"/><path d="M7 16 L14 10 V22 Z M25 16 L18 10 V22 Z" fill="#f2f2f2"/></svg>
<svg class="a" style="left:2769px;top:158px;" width="30" height="28" viewBox="0 0 30 28"><path d="M2 14 H7 M7 3 V25" stroke="#f6f6f6" stroke-width="2.3" fill="none"/><polyline points="7,3 11,21.5 11,6.5 15,18 15,9.5 19,16 19,12 22,14 28,14" stroke="#f6f6f6" stroke-width="2.3" fill="none"/></svg>
<svg class="a" style="left:2835px;top:160px;" width="24" height="24" viewBox="0 0 24 24"><rect x="0" y="0" width="24" height="24" fill="#f2f2f2"/><rect x="4" y="0" width="3" height="15" fill="#3c3c3c"/><rect x="10.5" y="0" width="3" height="15" fill="#3c3c3c"/><rect x="17" y="0" width="3" height="15" fill="#3c3c3c"/><rect x="7" y="15" width="1.2" height="9" fill="#3c3c3c"/><rect x="16" y="15" width="1.2" height="9" fill="#3c3c3c"/></svg>
<svg class="a" style="left:2896px;top:158px;" width="28" height="28" viewBox="0 0 28 28"><circle cx="14" cy="14" r="13.5" fill="#dcdcdc"/><circle cx="14" cy="14" r="5" fill="#888"/><circle cx="14" cy="14" r="2.5" fill="#333"/></svg>
<div class="a" style="left:2944px;top:151px;width:56px;height:42px;background:#2f2f2f;border-radius:6px;"></div>
<svg class="a" style="left:2959px;top:161px;" width="27" height="22" viewBox="0 0 27 22"><rect x="0" y="0" width="27" height="22" fill="#f08a24"/><rect x="2" y="5" width="23" height="15" fill="#b25c14"/></svg>
<svg class="a" style="left:3022px;top:160px;" width="28" height="24" viewBox="0 0 28 24"><rect x="1" y="1" width="26" height="16" fill="#d8d8d8" stroke="#eee" stroke-width="1"/><rect x="11" y="17" width="6" height="4" fill="#ccc"/><rect x="7" y="21" width="14" height="3" fill="#ccc"/></svg>
<div class="a" style="left:2630px;top:200px;width:434px;height:41px;background:#1a1a1a;border-radius:8px;"></div>
<svg class="a" style="left:2643px;top:210px;" width="30" height="22" viewBox="0 0 30 22"><circle cx="8.5" cy="8.5" r="6.5" fill="none" stroke="#f2f2f2" stroke-width="3"/><line x1="13" y1="13" x2="19" y2="19" stroke="#f2f2f2" stroke-width="3.5"/><path d="M19 10 H29 L24 15 Z" fill="#f2f2f2"/></svg>
<svg class="a" style="left:3027px;top:213px;" width="15" height="15" viewBox="0 0 15 15"><path d="M1 1 L14 14 M14 1 L1 14" stroke="#f2f2f2" stroke-width="2.8"/></svg>
<div class="a" style="left:2630px;top:249px;width:434px;height:39px;background:#545454;"></div>
<div class="a" style="left:2630px;top:287px;width:434px;height:2px;background:#3a3a3a;"></div>
<svg class="a" style="left:2645px;top:262px;" width="15" height="12" viewBox="0 0 15 12"><rect x="0" y="0" width="14" height="2.5" fill="#e8e8e8"/><rect x="0" y="4.5" width="14" height="2.5" fill="#e8e8e8"/><rect x="0" y="9" width="14" height="2.5" fill="#e8e8e8"/></svg>
<div class="t" style="left:2672px;top:258px;font-size:22px;color:#f2f2f2;text-align:left;white-space:nowrap;">Collection</div>
<div class="a" style="left:2630px;top:289px;width:434px;height:39px;background:#474747;"></div>
<svg class="a" style="left:2645px;top:302px;" width="15" height="12" viewBox="0 0 15 12"><rect x="0" y="0" width="14" height="2.5" fill="#e8e8e8"/><rect x="0" y="4.5" width="14" height="2.5" fill="#e8e8e8"/><rect x="0" y="9" width="14" height="2.5" fill="#e8e8e8"/></svg>
<div class="t" style="left:2672px;top:298px;font-size:22px;color:#f2f2f2;text-align:left;white-space:nowrap;">Location</div>
<div class="a" style="left:2629px;top:329px;width:436px;height:453px;background:#0b0b0b;"></div>
<div class="a" style="left:2633px;top:333px;width:427px;height:40px;background:#2c3a45;"></div>
<svg class="a" style="left:2644px;top:342px;" width="24" height="24" viewBox="0 0 24 24"><circle cx="12" cy="12" r="10" fill="none" stroke="#a8a8a8" stroke-width="3.2"/></svg>
<div class="t" style="left:2682px;top:342px;font-size:22px;color:#f4f4f4;text-align:left;white-space:nowrap;">All Clip Locations</div>
<div class="t" style="left:3019px;top:344px;font-size:19px;color:#9a9a9a;text-align:left;white-space:nowrap;">99+</div>
<svg class="a" style="left:2643px;top:384px;" width="14" height="16" viewBox="0 0 14 16"><path d="M0 0 L13 8 L0 16 Z" fill="#5a5a5a"/></svg>
<svg class="a" style="left:2670px;top:380px;" width="28" height="28" viewBox="0 0 28 28"><circle cx="14" cy="7" r="6.3" fill="#e0304a"/><circle cx="7" cy="20" r="6.3" fill="#e0304a"/><circle cx="21" cy="20" r="6.3" fill="#e0304a"/></svg>
<div class="t" style="left:2707px;top:382px;font-size:22px;color:#f4f4f4;text-align:left;white-space:nowrap;">Packages</div>
<div class="t" style="left:3019px;top:384px;font-size:19px;color:#9a9a9a;text-align:left;white-space:nowrap;">99+</div>
<svg class="a" style="left:2671px;top:421px;" width="30" height="24" viewBox="0 0 30 24"><defs><linearGradient id="lg" x1="0" y1="0" x2="1" y2="0"><stop offset="0" stop-color="#d8e6b8"/><stop offset="1" stop-color="#a8bc88"/></linearGradient></defs><rect x="0" y="0" width="30" height="24" fill="#c8d8a8"/><rect x="0" y="0" width="30" height="24" fill="url(#lg)"/><rect x="16" y="2.0" width="12" height="3.5" fill="#6f8a4a"/><rect x="16" y="7.5" width="12" height="3.5" fill="#6f8a4a"/><rect x="16" y="13.0" width="12" height="3.5" fill="#6f8a4a"/><rect x="16" y="18.5" width="12" height="3.5" fill="#6f8a4a"/><circle cx="8" cy="8" r="3.2" fill="#6f8a4a"/><path d="M2 19 Q8 10 14 19 Z" fill="#6f8a4a"/></svg>
<div class="t" style="left:2711px;top:423px;font-size:22px;color:#f4f4f4;text-align:left;white-space:nowrap;">My Library</div>
<svg class="a" style="left:2671px;top:462px;" width="30" height="24" viewBox="0 0 30 24"><defs><linearGradient id="lg" x1="0" y1="0" x2="1" y2="0"><stop offset="0" stop-color="#d8e6b8"/><stop offset="1" stop-color="#a8bc88"/></linearGradient></defs><rect x="0" y="0" width="30" height="24" fill="#c8d8a8"/><rect x="0" y="0" width="30" height="24" fill="url(#lg)"/><rect x="16" y="2.0" width="12" height="3.5" fill="#6f8a4a"/><rect x="16" y="7.5" width="12" height="3.5" fill="#6f8a4a"/><rect x="16" y="13.0" width="12" height="3.5" fill="#6f8a4a"/><rect x="16" y="18.5" width="12" height="3.5" fill="#6f8a4a"/></svg>
<div class="t" style="left:2711px;top:463px;font-size:22px;color:#f4f4f4;text-align:left;white-space:nowrap;">System Plug-in Presets</div>
<svg class="a" style="left:2671px;top:502px;" width="30" height="24" viewBox="0 0 30 24"><defs><linearGradient id="lg" x1="0" y1="0" x2="1" y2="0"><stop offset="0" stop-color="#d8e6b8"/><stop offset="1" stop-color="#a8bc88"/></linearGradient></defs><rect x="0" y="0" width="30" height="24" fill="#c8d8a8"/><rect x="0" y="0" width="30" height="24" fill="url(#lg)"/><rect x="16" y="2.0" width="12" height="3.5" fill="#6f8a4a"/><rect x="16" y="7.5" width="12" height="3.5" fill="#6f8a4a"/><rect x="16" y="13.0" width="12" height="3.5" fill="#6f8a4a"/><rect x="16" y="18.5" width="12" height="3.5" fill="#6f8a4a"/></svg>
<div class="t" style="left:2711px;top:503px;font-size:22px;color:#f4f4f4;text-align:left;white-space:nowrap;">My Plug-in Presets</div>
<div class="a" style="left:2629px;top:782px;width:436px;height:6px;background:#4a4a4a;"></div>
<div class="a" style="left:2629px;top:788px;width:436px;height:652px;background:#0b0b0b;"></div>
<svg class="a" style="left:2641px;top:799px;" width="30" height="30" viewBox="0 0 30 30"><rect x="0" y="0" width="30" height="30" fill="#3ec0f4"/><rect x="3" y="9" width="24" height="18" fill="#050505"/><rect x="5" y="12" width="11" height="2.5" fill="#3ec0f4"/><rect x="18" y="17" width="8" height="2.5" fill="#3ec0f4"/><rect x="5" y="22" width="11" height="2.5" fill="#3ec0f4"/></svg>
<div class="t" style="left:2682px;top:803px;font-size:22px;color:#f4f4f4;text-align:left;white-space:nowrap;">Electro Beat 09</div>
<svg class="a" style="left:3012px;top:803px;" width="22" height="22" viewBox="0 0 22 22"><path d="M11 1 L13.6 8 L21 8.2 L15.2 12.8 L17.3 20 L11 15.8 L4.7 20 L6.8 12.8 L1 8.2 L8.4 8 Z" fill="#6a5a2a"/></svg>
<svg class="a" style="left:2641px;top:839px;" width="30" height="30" viewBox="0 0 30 30"><rect x="0" y="0" width="30" height="30" fill="#3ec0f4"/><rect x="3" y="9" width="24" height="18" fill="#050505"/><rect x="5" y="12" width="11" height="2.5" fill="#3ec0f4"/><rect x="18" y="17" width="8" height="2.5" fill="#3ec0f4"/><rect x="5" y="22" width="11" height="2.5" fill="#3ec0f4"/></svg>
<div class="t" style="left:2682px;top:843px;font-size:22px;color:#f4f4f4;text-align:left;white-space:nowrap;">Electro Beat 10</div>
<svg class="a" style="left:3012px;top:843px;" width="22" height="22" viewBox="0 0 22 22"><path d="M11 1 L13.6 8 L21 8.2 L15.2 12.8 L17.3 20 L11 15.8 L4.7 20 L6.8 12.8 L1 8.2 L8.4 8 Z" fill="#6a5a2a"/></svg>
<svg class="a" style="left:2641px;top:879px;" width="30" height="30" viewBox="0 0 30 30"><rect x="0" y="0" width="30" height="30" fill="#3ec0f4"/><rect x="3" y="9" width="24" height="18" fill="#050505"/><rect x="5" y="12" width="11" height="2.5" fill="#3ec0f4"/><rect x="18" y="17" width="8" height="2.5" fill="#3ec0f4"/><rect x="5" y="22" width="11" height="2.5" fill="#3ec0f4"/></svg>
<div class="t" style="left:2682px;top:883px;font-size:22px;color:#f4f4f4;text-align:left;white-space:nowrap;">Electron Drums</div>
<svg class="a" style="left:3012px;top:883px;" width="22" height="22" viewBox="0 0 22 22"><path d="M11 1 L13.6 8 L21 8.2 L15.2 12.8 L17.3 20 L11 15.8 L4.7 20 L6.8 12.8 L1 8.2 L8.4 8 Z" fill="#6a5a2a"/></svg>
<svg class="a" style="left:2641px;top:919px;" width="30" height="30" viewBox="0 0 30 30"><rect x="0" y="0" width="30" height="30" fill="#3ec0f4"/><rect x="3" y="9" width="24" height="18" fill="#050505"/><rect x="5" y="12" width="11" height="2.5" fill="#3ec0f4"/><rect x="18" y="17" width="8" height="2.5" fill="#3ec0f4"/><rect x="5" y="22" width="11" height="2.5" fill="#3ec0f4"/></svg>
<div class="t" style="left:2682px;top:923px;font-size:22px;color:#f4f4f4;text-align:left;white-space:nowrap;">Enso Chords</div>
<svg class="a" style="left:3012px;top:923px;" width="22" height="22" viewBox="0 0 22 22"><path d="M11 1 L13.6 8 L21 8.2 L15.2 12.8 L17.3 20 L11 15.8 L4.7 20 L6.8 12.8 L1 8.2 L8.4 8 Z" fill="#6a5a2a"/></svg>
<svg class="a" style="left:2641px;top:959px;" width="30" height="30" viewBox="0 0 30 30"><rect x="0" y="0" width="30" height="30" fill="#3ec0f4"/><rect x="3" y="9" width="24" height="18" fill="#050505"/><rect x="5" y="12" width="11" height="2.5" fill="#3ec0f4"/><rect x="18" y="17" width="8" height="2.5" fill="#3ec0f4"/><rect x="5" y="22" width="11" height="2.5" fill="#3ec0f4"/></svg>
<div class="t" style="left:2682px;top:963px;font-size:22px;color:#f4f4f4;text-align:left;white-space:nowrap;">Enso Paddy</div>
<svg class="a" style="left:3012px;top:963px;" width="22" height="22" viewBox="0 0 22 22"><path d="M11 1 L13.6 8 L21 8.2 L15.2 12.8 L17.3 20 L11 15.8 L4.7 20 L6.8 12.8 L1 8.2 L8.4 8 Z" fill="#6a5a2a"/></svg>
<svg class="a" style="left:2641px;top:999px;" width="30" height="30" viewBox="0 0 30 30"><rect x="0" y="0" width="30" height="30" fill="#3ec0f4"/><rect x="3" y="9" width="24" height="18" fill="#050505"/><rect x="5" y="12" width="11" height="2.5" fill="#3ec0f4"/><rect x="18" y="17" width="8" height="2.5" fill="#3ec0f4"/><rect x="5" y="22" width="11" height="2.5" fill="#3ec0f4"/></svg>
<div class="t" style="left:2682px;top:1003px;font-size:22px;color:#f4f4f4;text-align:left;white-space:nowrap;">Euclid Pipe Beat</div>
<svg class="a" style="left:3012px;top:1003px;" width="22" height="22" viewBox="0 0 22 22"><path d="M11 1 L13.6 8 L21 8.2 L15.2 12.8 L17.3 20 L11 15.8 L4.7 20 L6.8 12.8 L1 8.2 L8.4 8 Z" fill="#6a5a2a"/></svg>
<svg class="a" style="left:2641px;top:1039px;" width="30" height="30" viewBox="0 0 30 30"><rect x="0" y="0" width="30" height="30" fill="#3ec0f4"/><rect x="3" y="9" width="24" height="18" fill="#050505"/><rect x="5" y="12" width="11" height="2.5" fill="#3ec0f4"/><rect x="18" y="17" width="8" height="2.5" fill="#3ec0f4"/><rect x="5" y="22" width="11" height="2.5" fill="#3ec0f4"/></svg>
<div class="t" style="left:2682px;top:1043px;font-size:22px;color:#f4f4f4;text-align:left;white-space:nowrap;">Euclidean909 118bpm</div>
<svg class="a" style="left:3012px;top:1043px;" width="22" height="22" viewBox="0 0 22 22"><path d="M11 1 L13.6 8 L21 8.2 L15.2 12.8 L17.3 20 L11 15.8 L4.7 20 L6.8 12.8 L1 8.2 L8.4 8 Z" fill="#6a5a2a"/></svg>
<svg class="a" style="left:2641px;top:1079px;" width="30" height="30" viewBox="0 0 30 30"><rect x="0" y="0" width="30" height="30" fill="#3ec0f4"/><rect x="3" y="9" width="24" height="18" fill="#050505"/><rect x="5" y="12" width="11" height="2.5" fill="#3ec0f4"/><rect x="18" y="17" width="8" height="2.5" fill="#3ec0f4"/><rect x="5" y="22" width="11" height="2.5" fill="#3ec0f4"/></svg>
<div class="t" style="left:2682px;top:1083px;font-size:22px;color:#f4f4f4;text-align:left;white-space:nowrap;">Eulydean Sequence 1</div>
<svg class="a" style="left:3012px;top:1083px;" width="22" height="22" viewBox="0 0 22 22"><path d="M11 1 L13.6 8 L21 8.2 L15.2 12.8 L17.3 20 L11 15.8 L4.7 20 L6.8 12.8 L1 8.2 L8.4 8 Z" fill="#6a5a2a"/></svg>
<svg class="a" style="left:2641px;top:1119px;" width="30" height="30" viewBox="0 0 30 30"><rect x="0" y="0" width="30" height="30" fill="#3ec0f4"/><rect x="3" y="9" width="24" height="18" fill="#050505"/><rect x="5" y="12" width="11" height="2.5" fill="#3ec0f4"/><rect x="18" y="17" width="8" height="2.5" fill="#3ec0f4"/><rect x="5" y="22" width="11" height="2.5" fill="#3ec0f4"/></svg>
<div class="t" style="left:2682px;top:1123px;font-size:22px;color:#f4f4f4;text-align:left;white-space:nowrap;">Eulydean Sequence 2</div>
<svg class="a" style="left:3012px;top:1123px;" width="22" height="22" viewBox="0 0 22 22"><path d="M11 1 L13.6 8 L21 8.2 L15.2 12.8 L17.3 20 L11 15.8 L4.7 20 L6.8 12.8 L1 8.2 L8.4 8 Z" fill="#6a5a2a"/></svg>
<svg class="a" style="left:2641px;top:1159px;" width="30" height="30" viewBox="0 0 30 30"><rect x="0" y="0" width="30" height="30" fill="#3ec0f4"/><rect x="3" y="9" width="24" height="18" fill="#050505"/><rect x="5" y="12" width="11" height="2.5" fill="#3ec0f4"/><rect x="18" y="17" width="8" height="2.5" fill="#3ec0f4"/><rect x="5" y="22" width="11" height="2.5" fill="#3ec0f4"/></svg>
<div class="t" style="left:2682px;top:1163px;font-size:22px;color:#f4f4f4;text-align:left;white-space:nowrap;">Falling Up</div>
<svg class="a" style="left:3012px;top:1163px;" width="22" height="22" viewBox="0 0 22 22"><path d="M11 1 L13.6 8 L21 8.2 L15.2 12.8 L17.3 20 L11 15.8 L4.7 20 L6.8 12.8 L1 8.2 L8.4 8 Z" fill="#6a5a2a"/></svg>
<svg class="a" style="left:2641px;top:1199px;" width="30" height="30" viewBox="0 0 30 30"><rect x="0" y="0" width="30" height="30" fill="#3ec0f4"/><rect x="3" y="9" width="24" height="18" fill="#050505"/><rect x="5" y="12" width="11" height="2.5" fill="#3ec0f4"/><rect x="18" y="17" width="8" height="2.5" fill="#3ec0f4"/><rect x="5" y="22" width="11" height="2.5" fill="#3ec0f4"/></svg>
<div class="t" style="left:2682px;top:1203px;font-size:22px;color:#f4f4f4;text-align:left;white-space:nowrap;">FastStepDrums 123bpm</div>
<svg class="a" style="left:3012px;top:1203px;" width="22" height="22" viewBox="0 0 22 22"><path d="M11 1 L13.6 8 L21 8.2 L15.2 12.8 L17.3 20 L11 15.8 L4.7 20 L6.8 12.8 L1 8.2 L8.4 8 Z" fill="#6a5a2a"/></svg>
<svg class="a" style="left:2641px;top:1239px;" width="30" height="30" viewBox="0 0 30 30"><rect x="0" y="0" width="30" height="30" fill="#3ec0f4"/><rect x="3" y="9" width="24" height="18" fill="#050505"/><rect x="5" y="12" width="11" height="2.5" fill="#3ec0f4"/><rect x="18" y="17" width="8" height="2.5" fill="#3ec0f4"/><rect x="5" y="22" width="11" height="2.5" fill="#3ec0f4"/></svg>
<div class="t" style="left:2682px;top:1243px;font-size:22px;color:#f4f4f4;text-align:left;white-space:nowrap;">Feeling Analog</div>
<svg class="a" style="left:3012px;top:1243px;" width="22" height="22" viewBox="0 0 22 22"><path d="M11 1 L13.6 8 L21 8.2 L15.2 12.8 L17.3 20 L11 15.8 L4.7 20 L6.8 12.8 L1 8.2 L8.4 8 Z" fill="#6a5a2a"/></svg>
<svg class="a" style="left:2641px;top:1279px;" width="30" height="30" viewBox="0 0 30 30"><rect x="0" y="0" width="30" height="30" fill="#3ec0f4"/><rect x="3" y="9" width="24" height="18" fill="#050505"/><rect x="5" y="12" width="11" height="2.5" fill="#3ec0f4"/><rect x="18" y="17" width="8" height="2.5" fill="#3ec0f4"/><rect x="5" y="22" width="11" height="2.5" fill="#3ec0f4"/></svg>
<div class="t" style="left:2682px;top:1283px;font-size:22px;color:#f4f4f4;text-align:left;white-space:nowrap;">Filter Backline</div>
<svg class="a" style="left:3012px;top:1283px;" width="22" height="22" viewBox="0 0 22 22"><path d="M11 1 L13.6 8 L21 8.2 L15.2 12.8 L17.3 20 L11 15.8 L4.7 20 L6.8 12.8 L1 8.2 L8.4 8 Z" fill="#6a5a2a"/></svg>
<svg class="a" style="left:2641px;top:1319px;" width="30" height="30" viewBox="0 0 30 30"><rect x="0" y="0" width="30" height="30" fill="#3ec0f4"/><rect x="3" y="9" width="24" height="18" fill="#050505"/><rect x="5" y="12" width="11" height="2.5" fill="#3ec0f4"/><rect x="18" y="17" width="8" height="2.5" fill="#3ec0f4"/><rect x="5" y="22" width="11" height="2.5" fill="#3ec0f4"/></svg>
<div class="t" style="left:2682px;top:1323px;font-size:22px;color:#f4f4f4;text-align:left;white-space:nowrap;">Firework Factory Bass</div>
<svg class="a" style="left:3012px;top:1323px;" width="22" height="22" viewBox="0 0 22 22"><path d="M11 1 L13.6 8 L21 8.2 L15.2 12.8 L17.3 20 L11 15.8 L4.7 20 L6.8 12.8 L1 8.2 L8.4 8 Z" fill="#6a5a2a"/></svg>
<svg class="a" style="left:2641px;top:1359px;" width="30" height="30" viewBox="0 0 30 30"><rect x="0" y="0" width="30" height="30" fill="#3ec0f4"/><rect x="3" y="9" width="24" height="18" fill="#050505"/><rect x="5" y="12" width="11" height="2.5" fill="#3ec0f4"/><rect x="18" y="17" width="8" height="2.5" fill="#3ec0f4"/><rect x="5" y="22" width="11" height="2.5" fill="#3ec0f4"/></svg>
<div class="t" style="left:2682px;top:1363px;font-size:22px;color:#f4f4f4;text-align:left;white-space:nowrap;">Flexanium</div>
<svg class="a" style="left:3012px;top:1363px;" width="22" height="22" viewBox="0 0 22 22"><path d="M11 1 L13.6 8 L21 8.2 L15.2 12.8 L17.3 20 L11 15.8 L4.7 20 L6.8 12.8 L1 8.2 L8.4 8 Z" fill="#6a5a2a"/></svg>
<div class="a" style="left:2633px;top:1395px;width:427px;height:40px;background:#2c3a45;"></div>
<svg class="a" style="left:2641px;top:1399px;" width="30" height="30" viewBox="0 0 30 30"><rect x="0" y="0" width="30" height="30" fill="#f07838"/><rect x="3" y="4" width="24" height="23" fill="#1a0e08"/><path d="M5 22 V8 M7 20 V11 M9 22 V9 M11 19 V13 M13 21 V12 M15 18 V14 M17 19 V13 M19 17 V15 H26" stroke="#f07838" stroke-width="1.6" fill="none"/></svg>
<div class="t" style="left:2682px;top:1403px;font-size:22px;color:#f4f4f4;text-align:left;white-space:nowrap;">Floating Mel 133bpm</div>
<svg class="a" style="left:3012px;top:1403px;" width="22" height="22" viewBox="0 0 22 22"><path d="M11 1 L13.6 8 L21 8.2 L15.2 12.8 L17.3 20 L11 15.8 L4.7 20 L6.8 12.8 L1 8.2 L8.4 8 Z" fill="#7a6a3a"/></svg>
<div class="a" style="left:3057px;top:1016px;width:7px;height:35px;background:#3a3a3a;"></div>
<div class="a" style="left:2625px;top:1440px;width:444px;height:154px;background:#404040;border:4px solid #555;border-top:none;border-radius:0 0 7px 7px;"></div>
<div class="a" style="left:2629px;top:1448px;width:436px;height:142px;background:#222;border-radius:8px;"></div>
<div class="a" style="left:2645px;top:1462px;width:26px;height:24px;background:#7a4a1a;"></div>
<div class="a" style="left:2645px;top:1462px;width:26px;height:3px;background:#f08a24;"></div>
<div class="a" style="left:2681px;top:1457px;width:42px;height:32px;background:#555;border-radius:6px;"></div>
<svg class="a" style="left:2687px;top:1461px;" width="32" height="24" viewBox="0 0 32 24"><path d="M2 1 L2 19 L6 15 L9 22 L12 21 L9 14 L15 14 Z" fill="#f0f0f0"/><path d="M19 8 L25 4 V14 L19 10 Z" fill="#f0f0f0"/></svg>
<div class="a" style="left:2733px;top:1457px;width:30px;height:32px;background:#555;border-radius:6px;"></div>
<svg class="a" style="left:2741px;top:1462px;" width="16" height="22" viewBox="0 0 16 22"><path d="M6 2 V17" stroke="#f0f0f0" stroke-width="2"/><ellipse cx="4" cy="17" rx="4" ry="3" fill="#f0f0f0"/><path d="M6 2 Q12 4 13 9" stroke="#f0f0f0" stroke-width="2" fill="none"/></svg>
<div class="a" style="left:2771px;top:1455px;width:220px;height:33px;background:#181818;"></div>
<svg class="a" style="left:2771px;top:1455px;" width="220" height="33" viewBox="0 0 220 33"><rect x="3" y="14.5" width="2" height="4.0" fill="#3a9ad8"/><rect x="5" y="12.5" width="2" height="8.0" fill="#3a9ad8"/><rect x="7" y="10.5" width="2" height="12.0" fill="#3a9ad8"/><rect x="9" y="8.5" width="2" height="16.0" fill="#3a9ad8"/><rect x="11" y="7.9" width="2" height="17.3" fill="#3a9ad8"/><rect x="13" y="12.9" width="2" height="7.2" fill="#3a9ad8"/><rect x="15" y="13.4" width="2" height="6.2" fill="#3a9ad8"/><rect x="17" y="6.0" width="2" height="21.1" fill="#3a9ad8"/><rect x="19" y="11.2" width="2" height="10.7" fill="#3a9ad8"/><rect x="21" y="11.4" width="2" height="10.2" fill="#3a9ad8"/><rect x="23" y="4.5" width="2" height="23.9" fill="#3a9ad8"/><rect x="25" y="9.3" width="2" height="14.5" fill="#3a9ad8"/><rect x="27" y="6.0" width="2" height="21.1" fill="#3a9ad8"/><rect x="29" y="9.2" width="2" height="14.6" fill="#3a9ad8"/><rect x="31" y="7.7" width="2" height="17.5" fill="#3a9ad8"/><rect x="33" y="12.1" width="2" height="8.7" fill="#3a9ad8"/><rect x="35" y="7.8" width="2" height="17.4" fill="#3a9ad8"/><rect x="37" y="5.7" width="2" height="21.6" fill="#3a9ad8"/><rect x="39" y="8.8" width="2" height="15.4" fill="#3a9ad8"/><rect x="41" y="6.8" width="2" height="19.3" fill="#3a9ad8"/><rect x="43" y="7.5" width="2" height="18.1" fill="#3a9ad8"/><rect x="45" y="12.9" width="2" height="7.2" fill="#3a9ad8"/><rect x="47" y="6.7" width="2" height="19.6" fill="#3a9ad8"/><rect x="49" y="8.2" width="2" height="16.6" fill="#3a9ad8"/><rect x="51" y="10.8" width="2" height="11.4" fill="#3a9ad8"/><rect x="53" y="13.2" width="2" height="6.6" fill="#3a9ad8"/><rect x="55" y="5.7" width="2" height="21.6" fill="#3a9ad8"/><rect x="57" y="9.2" width="2" height="14.5" fill="#3a9ad8"/><rect x="59" y="7.0" width="2" height="18.9" fill="#3a9ad8"/><rect x="61" y="5.6" width="2" height="21.8" fill="#3a9ad8"/><rect x="63" y="7.1" width="2" height="18.9" fill="#3a9ad8"/><rect x="65" y="5.2" width="2" height="22.6" fill="#3a9ad8"/><rect x="67" y="9.9" width="2" height="13.1" fill="#3a9ad8"/><rect x="69" y="6.3" width="2" height="20.4" fill="#3a9ad8"/><rect x="71" y="9.5" width="2" height="14.0" fill="#3a9ad8"/><rect x="73" y="5.1" width="2" height="22.8" fill="#3a9ad8"/><rect x="75" y="5.6" width="2" height="21.8" fill="#3a9ad8"/><rect x="77" y="12.6" width="2" height="7.8" fill="#3a9ad8"/><rect x="79" y="12.3" width="2" height="8.4" fill="#3a9ad8"/><rect x="81" y="11.5" width="2" height="9.9" fill="#3a9ad8"/><rect x="83" y="4.8" width="2" height="23.4" fill="#3a9ad8"/><rect x="85" y="9.6" width="2" height="13.9" fill="#3a9ad8"/><rect x="87" y="7.9" width="2" height="17.3" fill="#3a9ad8"/><rect x="89" y="10.8" width="2" height="11.4" fill="#3a9ad8"/><rect x="91" y="8.9" width="2" height="15.1" fill="#3a9ad8"/><rect x="93" y="10.0" width="2" height="12.9" fill="#3a9ad8"/><rect x="95" y="10.3" width="2" height="12.3" fill="#3a9ad8"/><rect x="97" y="8.2" width="2" height="16.5" fill="#3a9ad8"/><rect x="99" y="8.2" width="2" height="16.5" fill="#3a9ad8"/><rect x="101" y="5.4" width="2" height="22.3" fill="#3a9ad8"/><rect x="103" y="7.4" width="2" height="18.3" fill="#3a9ad8"/><rect x="105" y="5.1" width="2" height="22.7" fill="#3a9ad8"/><rect x="107" y="5.8" width="2" height="21.4" fill="#3a9ad8"/><rect x="109" y="4.6" width="2" height="23.8" fill="#3a9ad8"/><rect x="111" y="7.5" width="2" height="18.1" fill="#3a9ad8"/><rect x="113" y="12.0" width="2" height="8.9" fill="#3a9ad8"/><rect x="115" y="5.8" width="2" height="21.5" fill="#3a9ad8"/><rect x="117" y="4.8" width="2" height="23.4" fill="#3a9ad8"/><rect x="119" y="5.4" width="2" height="22.3" fill="#3a9ad8"/><rect x="121" y="8.4" width="2" height="16.2" fill="#3a9ad8"/><rect x="123" y="7.1" width="2" height="18.8" fill="#3a9ad8"/><rect x="125" y="11.6" width="2" height="9.8" fill="#3a9ad8"/><rect x="127" y="6.0" width="2" height="21.0" fill="#3a9ad8"/><rect x="129" y="8.3" width="2" height="16.3" fill="#3a9ad8"/><rect x="131" y="10.9" width="2" height="11.1" fill="#3a9ad8"/><rect x="133" y="12.9" width="2" height="7.1" fill="#3a9ad8"/><rect x="135" y="5.8" width="2" height="21.4" fill="#3a9ad8"/><rect x="137" y="4.6" width="2" height="23.8" fill="#3a9ad8"/><rect x="139" y="12.7" width="2" height="7.6" fill="#3a9ad8"/><rect x="141" y="6.3" width="2" height="20.4" fill="#3a9ad8"/><rect x="143" y="9.8" width="2" height="13.4" fill="#3a9ad8"/><rect x="145" y="12.1" width="2" height="8.7" fill="#3a9ad8"/><rect x="147" y="10.9" width="2" height="11.3" fill="#3a9ad8"/><rect x="149" y="6.6" width="2" height="19.8" fill="#3a9ad8"/><rect x="151" y="5.6" width="2" height="21.7" fill="#3a9ad8"/><rect x="153" y="13.1" width="2" height="6.8" fill="#3a9ad8"/><rect x="155" y="8.0" width="2" height="17.1" fill="#3a9ad8"/><rect x="157" y="13.1" width="2" height="6.8" fill="#3a9ad8"/><rect x="159" y="7.0" width="2" height="18.9" fill="#3a9ad8"/><rect x="161" y="10.5" width="2" height="12.0" fill="#3a9ad8"/><rect x="163" y="5.6" width="2" height="21.9" fill="#3a9ad8"/><rect x="165" y="4.7" width="2" height="23.7" fill="#3a9ad8"/><rect x="167" y="9.0" width="2" height="15.1" fill="#3a9ad8"/><rect x="169" y="4.5" width="2" height="24.0" fill="#3a9ad8"/><rect x="171" y="10.7" width="2" height="11.6" fill="#3a9ad8"/><rect x="173" y="12.8" width="2" height="7.4" fill="#3a9ad8"/><rect x="175" y="8.1" width="2" height="16.8" fill="#3a9ad8"/><rect x="177" y="13.2" width="2" height="6.6" fill="#3a9ad8"/><rect x="179" y="11.7" width="2" height="9.6" fill="#3a9ad8"/><rect x="181" y="9.8" width="2" height="13.3" fill="#3a9ad8"/><rect x="183" y="8.0" width="2" height="17.0" fill="#3a9ad8"/><rect x="185" y="12.1" width="2" height="8.8" fill="#3a9ad8"/><rect x="187" y="13.1" width="2" height="6.8" fill="#3a9ad8"/><rect x="189" y="5.7" width="2" height="21.6" fill="#3a9ad8"/><rect x="191" y="10.7" width="2" height="11.6" fill="#3a9ad8"/><rect x="193" y="4.9" width="2" height="23.3" fill="#3a9ad8"/><rect x="195" y="5.4" width="2" height="22.1" fill="#3a9ad8"/><rect x="197" y="10.1" width="2" height="12.8" fill="#3a9ad8"/><rect x="199" y="9.4" width="2" height="14.3" fill="#3a9ad8"/><rect x="201" y="8.8" width="2" height="15.4" fill="#3a9ad8"/><rect x="203" y="7.7" width="2" height="17.6" fill="#3a9ad8"/><rect x="205" y="8.1" width="2" height="16.7" fill="#3a9ad8"/><rect x="207" y="8.5" width="2" height="16.1" fill="#3a9ad8"/><rect x="209" y="7.9" width="2" height="17.2" fill="#3a9ad8"/><rect x="211" y="5.0" width="2" height="22.9" fill="#3a9ad8"/><rect x="213" y="8.9" width="2" height="15.1" fill="#3a9ad8"/><rect x="215" y="9.6" width="2" height="13.8" fill="#3a9ad8"/></svg>
<svg class="a" style="left:3005px;top:1461px;" width="20" height="22" viewBox="0 0 20 22"><path d="M0 0 L20 11 L0 22 Z" fill="#f6f6f6"/></svg>
<div class="a" style="left:3038px;top:1455px;width:5px;height:33px;background:#555;"></div>
<div class="a" style="left:3046px;top:1455px;width:5px;height:33px;background:#555;"></div>
<div class="t" style="left:2644px;top:1496px;font-size:22px;color:#f6f6f6;text-align:left;white-space:nowrap;">Floating Mel 133bpm</div>
<div class="t" style="left:2644px;top:1526px;font-size:22px;color:#f2f2f2;text-align:left;white-space:nowrap;">Creator: Genys</div>
<div class="a" style="left:2643px;top:1553px;width:408px;height:2px;background:#3e3e3e;"></div>
<div class="t" style="left:2644px;top:1562px;font-size:22px;color:#f2f2f2;text-align:left;white-space:nowrap;">Tags: deep loop organic smooth sparse</div>
<svg class="a" style="left:37px;top:1621px;" width="13" height="19" viewBox="0 0 13 19"><circle cx="6.5" cy="3" r="3" fill="#f08a24"/><path d="M1 7 H9 V16 H12 V19 H1 V16 H4 V10 H1 Z" fill="#f08a24"/></svg>
<div class="a" style="left:79px;top:1611px;width:4px;height:39px;background:#8a8a8a;"></div>
<div class="t" style="left:113px;top:1620px;font-size:22px;color:#f08a24;text-align:left;white-space:nowrap;letter-spacing:-0.7px;">ARRANGE</div>
<div class="t" style="left:246px;top:1620px;font-size:22px;color:#ececec;text-align:left;white-space:nowrap;">MIX</div>
<div class="t" style="left:318px;top:1620px;font-size:22px;color:#ececec;text-align:left;white-space:nowrap;">EDIT</div>
<div class="a" style="left:397px;top:1611px;width:4px;height:39px;background:#8a8a8a;"></div>
<svg class="a" style="left:429px;top:1618px;" width="23" height="23" viewBox="0 0 23 23"><rect x="0" y="0" width="6" height="4" fill="#c8c8c8"/><rect x="8" y="5" width="6" height="4" fill="#c8c8c8"/><rect x="16" y="7" width="6" height="4" fill="#c8c8c8"/><rect x="8" y="12" width="6" height="4" fill="#c8c8c8"/><rect x="16" y="12" width="6" height="4" fill="#c8c8c8"/><rect x="0" y="18" width="6" height="4" fill="#c8c8c8"/><rect x="8" y="18" width="6" height="4" fill="#c8c8c8"/></svg>
<svg class="a" style="left:491px;top:1618px;" width="22" height="23" viewBox="0 0 22 23"><circle cx="5" cy="17" r="3.5" fill="none" stroke="#c8c8c8" stroke-width="3"/><circle cx="17" cy="5" r="3.5" fill="none" stroke="#c8c8c8" stroke-width="3"/><line x1="7.5" y1="14.5" x2="14.5" y2="7.5" stroke="#c8c8c8" stroke-width="3"/></svg>
<div class="a" style="left:549px;top:1617px;width:30px;height:26px;background:none;border:4px solid #f08a24;border-radius:6px;"></div>
<svg class="a" style="left:615px;top:1619px;" width="23" height="22" viewBox="0 0 23 22"><rect x="0" y="0" width="5" height="22" fill="#c8c8c8"/><rect x="8" y="0" width="5" height="22" fill="#c8c8c8"/><rect x="16" y="0" width="6" height="22" fill="#c8c8c8"/></svg>
<svg class="a" style="left:2756px;top:1619px;" width="24" height="21" viewBox="0 0 24 21"><rect x="0" y="0" width="9" height="4" fill="#f08a24"/><rect x="0" y="4" width="23" height="16" fill="#f08a24"/><rect x="0" y="4" width="10" height="1.5" fill="#2e2e2e"/></svg>
<svg class="a" style="left:2821px;top:1619px;" width="19" height="23" viewBox="0 0 19 23"><path d="M0 0 H12 L18 6 V22 H0 Z" fill="#cfcfcf"/></svg>
<svg class="a" style="left:2881px;top:1620px;" width="23" height="21" viewBox="0 0 23 21"><path d="M22 5 H3 M8 0 L2 5 L8 10 M1 15 H20 M15 10 L21 15 L15 20" stroke="#c8c8c8" stroke-width="3" fill="none"/></svg>
<svg class="a" style="left:2942px;top:1617px;" width="23" height="25" viewBox="0 0 23 25"><path d="M6 12 V3 Q6 1 8 1 Q10 1 10 3 V10 L12 9 Q14 8 15 10 L17 9 Q19 8 20 10 L21 10 Q23 11 23 13 V18 Q22 24 16 24 H11 Q7 24 4 19 L1 14 Q1 12 3 12 Z" fill="#cfcfcf"/></svg>
<div class="a" style="left:2995px;top:1611px;width:4px;height:40px;background:#8a8a8a;"></div>
<svg class="a" style="left:3025px;top:1619px;" width="24" height="22" viewBox="0 0 24 22"><rect x="0" y="0" width="24" height="22" fill="#cfcfcf"/><rect x="4" y="0" width="3" height="13" fill="#2e2e2e"/><rect x="10.5" y="0" width="3" height="13" fill="#2e2e2e"/><rect x="17" y="0" width="3" height="13" fill="#2e2e2e"/><rect x="7" y="13" width="1.2" height="9" fill="#2e2e2e"/><rect x="16" y="13" width="1.2" height="9" fill="#2e2e2e"/></svg>
<div class="a" style="left:0px;top:1665px;width:3072px;height:1px;background:#8a8a8a;"></div>
</body></html>
